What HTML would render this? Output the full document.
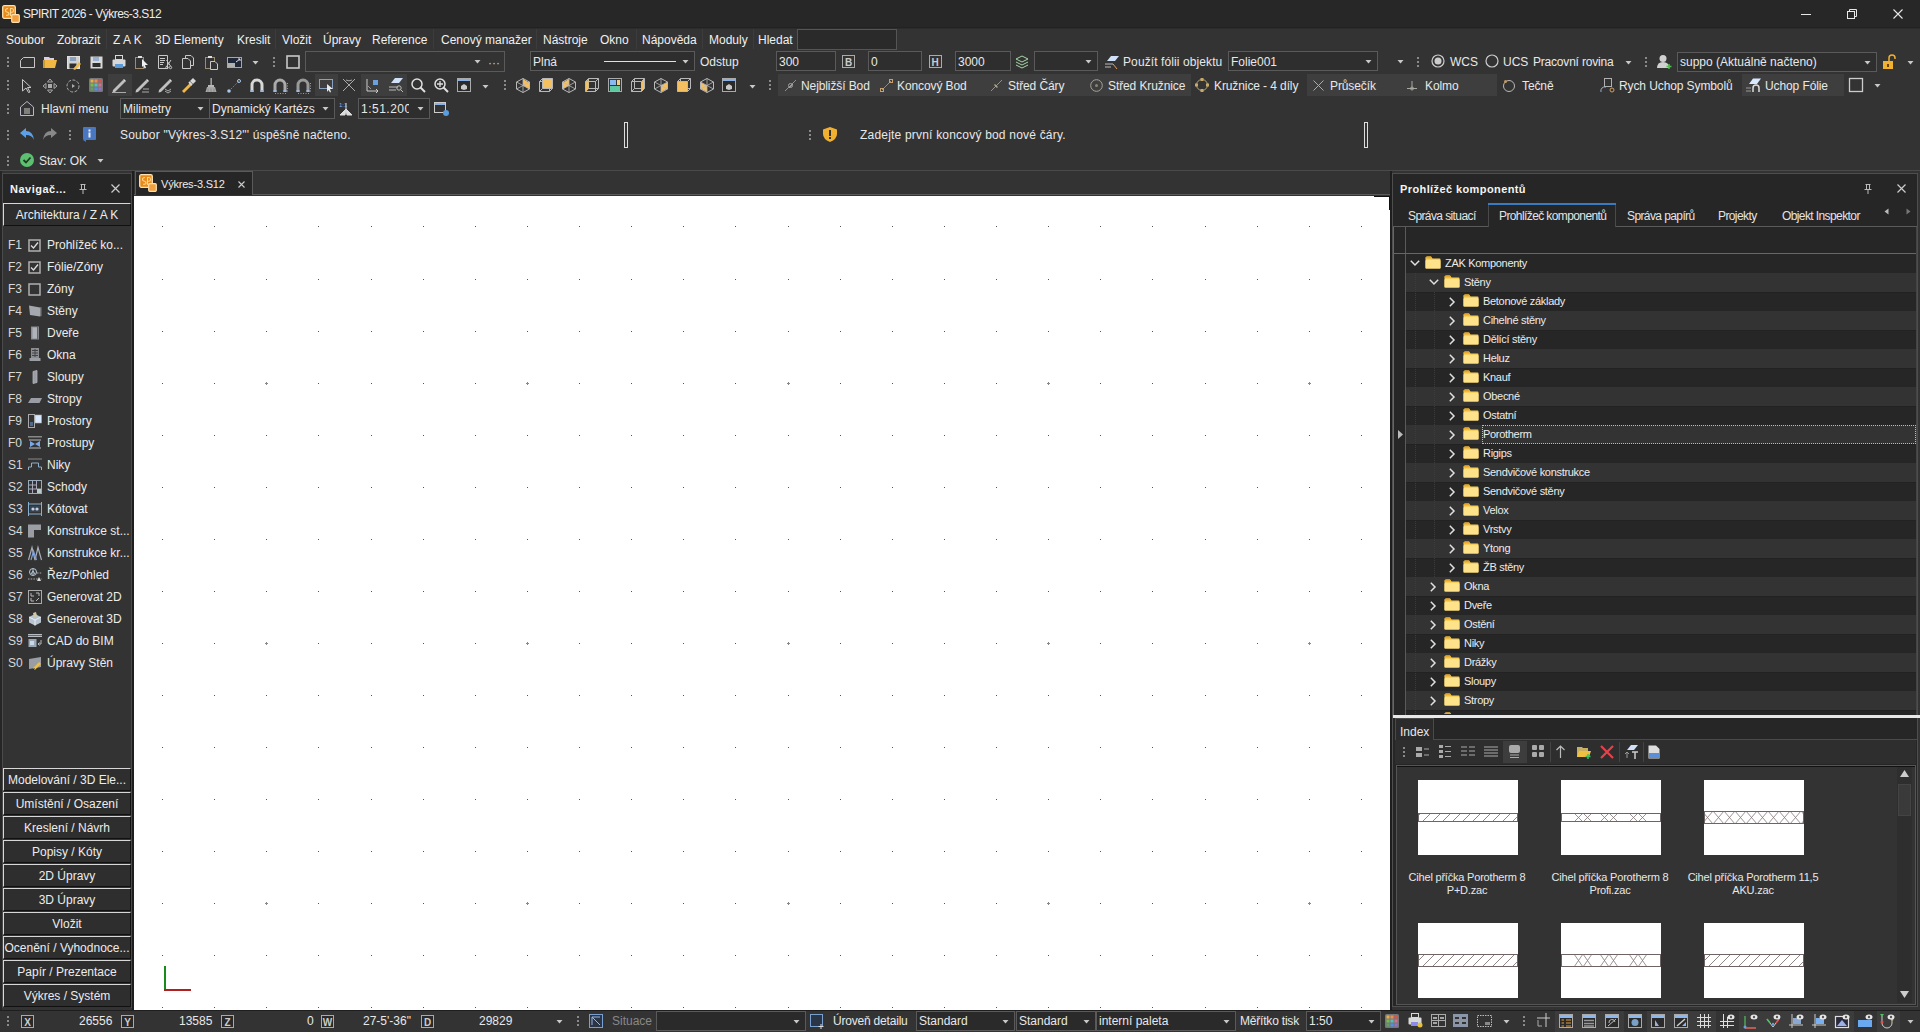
<!DOCTYPE html>
<html><head><meta charset="utf-8"><style>
html,body{margin:0;padding:0;}
body{width:1920px;height:1032px;overflow:hidden;position:relative;background:#333333;font-family:"Liberation Sans",sans-serif;}
body>div,body>span,body>svg{position:absolute;}
span{white-space:nowrap;line-height:normal;}
svg{overflow:visible;}
</style></head><body>
<div style="left:0px;top:0px;width:1920px;height:28px;background:#272727"></div>
<div style="left:0px;top:27px;width:1920px;height:1px;background:#222222"></div>
<div style="left:0px;top:28px;width:1920px;height:1px;background:#2c2c2c"></div>
<svg style="left:2px;top:5px;" width="18" height="18" viewBox="0 0 18 18"><rect x="0.7" y="0.7" width="12.6" height="12.6" rx="1.5" fill="#e88a1a" stroke="#ffe0b0" stroke-width="1.3"/><path d="M6 3.5Q3.5 3.5 3.5 5.5Q3.5 7 5.5 7.2Q7 7.5 7 9Q7 10.5 4 10.2M8.5 11V3.5H10Q11.5 3.5 11.5 5.5Q11.5 7.3 10 7.3H8.5" fill="none" stroke="#ffd890" stroke-width="1.1"/><rect x="9.7" y="9.7" width="7.6" height="7.6" rx="1" fill="#f0a040" stroke="#ffe0b0" stroke-width="1.2"/></svg>
<span style="left:23px;top:7px;font-size:12px;color:#ececec;letter-spacing:-0.5px">SPIRIT 2026 - Výkres-3.S12</span>
<div style="left:1801px;top:14px;width:10px;height:1px;background:#e8e8e8"></div>
<svg style="left:1847px;top:9px;" width="10" height="10" viewBox="0 0 10 10"><rect x="0.5" y="2.5" width="7" height="7" fill="none" stroke="#e8e8e8"/><path d="M2.5 2.5V0.5H9.5V7.5H7.5" fill="none" stroke="#e8e8e8"/></svg>
<svg style="left:1893px;top:9px;" width="10" height="10" viewBox="0 0 10 10"><path d="M0.5 0.5L9.5 9.5M9.5 0.5L0.5 9.5" stroke="#e8e8e8" stroke-width="1.1"/></svg>
<span style="left:6px;top:33px;font-size:12px;color:#f0f0f0;">Soubor</span>
<span style="left:57px;top:33px;font-size:12px;color:#f0f0f0;">Zobrazit</span>
<span style="left:113px;top:33px;font-size:12px;color:#f0f0f0;">Z A K</span>
<span style="left:155px;top:33px;font-size:12px;color:#f0f0f0;">3D Elementy</span>
<span style="left:237px;top:33px;font-size:12px;color:#f0f0f0;">Kreslit</span>
<span style="left:282px;top:33px;font-size:12px;color:#f0f0f0;">Vložit</span>
<span style="left:323px;top:33px;font-size:12px;color:#f0f0f0;">Úpravy</span>
<span style="left:372px;top:33px;font-size:12px;color:#f0f0f0;">Reference</span>
<span style="left:441px;top:33px;font-size:12px;color:#f0f0f0;">Cenový manažer</span>
<span style="left:543px;top:33px;font-size:12px;color:#f0f0f0;">Nástroje</span>
<span style="left:600px;top:33px;font-size:12px;color:#f0f0f0;">Okno</span>
<span style="left:642px;top:33px;font-size:12px;color:#f0f0f0;">Nápověda</span>
<span style="left:709px;top:33px;font-size:12px;color:#f0f0f0;">Moduly</span>
<span style="left:758px;top:33px;font-size:12px;color:#f0f0f0;">Hledat</span>
<div style="left:106px;top:29px;width:1px;height:20px;background:#3c3c3c"></div>
<div style="left:275px;top:29px;width:1px;height:20px;background:#3c3c3c"></div>
<div style="left:433px;top:29px;width:1px;height:20px;background:#3c3c3c"></div>
<div style="left:536px;top:29px;width:1px;height:20px;background:#3c3c3c"></div>
<div style="left:636px;top:29px;width:1px;height:20px;background:#3c3c3c"></div>
<div style="left:702px;top:29px;width:1px;height:20px;background:#3c3c3c"></div>
<div style="left:753px;top:29px;width:1px;height:20px;background:#3c3c3c"></div>
<div style="left:797px;top:29px;width:100px;height:21px;background:#2a2a2a;border:1px solid #555;box-sizing:border-box"></div>
<svg style="left:7px;top:57px;" width="2" height="10" viewBox="0 0 2 10"><rect x="0" y="0" width="2" height="2" fill="#8a8a8a"/><rect x="0" y="4" width="2" height="2" fill="#8a8a8a"/><rect x="0" y="8" width="2" height="2" fill="#8a8a8a"/></svg>
<svg style="left:20px;top:57px;" width="16" height="16" viewBox="0 0 16 16"><path d="M3.5 0.5H14.5V10.5H0.5V3.5Z" fill="none" stroke="#c8c8c8"/></svg>
<svg style="left:43px;top:56px;" width="16" height="16" viewBox="0 0 16 16"><path d="M1 1H6L7 2H11V4H1Z" fill="#d8d0e8"/><path d="M0 12L2 4H14L12 12Z" fill="#f2b844"/><path d="M0 4H2V12H0Z" fill="#c89a30"/></svg>
<svg style="left:67px;top:56px;" width="16" height="16" viewBox="0 0 16 16"><rect x="0.5" y="0.5" width="12" height="12" fill="#d0d0d0" stroke="#e0e0e0"/><rect x="3" y="1" width="6" height="4" fill="#8aa0c0"/><rect x="2.5" y="7.5" width="7" height="5" fill="#2e2e2e"/><path d="M6 13L12 6L14 8L8 14Z" fill="#f2b844"/></svg>
<svg style="left:90px;top:56px;" width="16" height="16" viewBox="0 0 16 16"><rect x="0.5" y="0.5" width="12" height="12" fill="#d8d8d8"/><rect x="3" y="1" width="6" height="4" fill="#9ab0d0"/><rect x="2.5" y="7" width="8" height="4" fill="#2e2e2e"/></svg>
<svg style="left:112px;top:55px;" width="16" height="16" viewBox="0 0 16 16"><rect x="3.5" y="0.5" width="7" height="4" fill="none" stroke="#d8d8d8"/><rect x="0.5" y="4.5" width="13" height="7" rx="1" fill="#d8d8d8"/><rect x="3" y="9" width="8" height="4" fill="#5b9bd5"/></svg>
<svg style="left:135px;top:55px;" width="16" height="16" viewBox="0 0 16 16"><rect x="0.5" y="2.5" width="8" height="11" fill="none" stroke="#a08c6c"/><rect x="3" y="1" width="4" height="2" fill="#e0e0e0"/><path d="M7 4L13 10H10L11 13L9.5 13.5L8.5 10.5L7 12Z" fill="#f0f0f0"/></svg>
<svg style="left:158px;top:55px;" width="16" height="16" viewBox="0 0 16 16"><path d="M0.5 0.5H9.5V13.5H0.5Z" fill="none" stroke="#c8c8c8"/><path d="M2 3.5H7M2 5.5H7M2 7.5H6M2 9.5H5" stroke="#c8c8c8"/><circle cx="9" cy="12.5" r="1.2" fill="none" stroke="#c8c8c8"/><circle cx="12.5" cy="12.5" r="1.2" fill="none" stroke="#c8c8c8"/><path d="M9 11L13 5M12.5 11L8.5 5" stroke="#c8c8c8"/></svg>
<svg style="left:182px;top:55px;" width="16" height="16" viewBox="0 0 16 16"><path d="M3.5 0.5H9L11.5 3V10.5H3.5Z" fill="none" stroke="#c8c8c8"/><path d="M0.5 3.5H6L8.5 6V13.5H0.5Z" fill="#333" stroke="#c8c8c8"/></svg>
<svg style="left:205px;top:55px;" width="16" height="16" viewBox="0 0 16 16"><rect x="0.5" y="2.5" width="9" height="11" fill="none" stroke="#a08c6c"/><rect x="3" y="1" width="4" height="2" fill="#e0e0e0"/><path d="M5.5 6.5H10L12.5 9V14.5H5.5Z" fill="#333" stroke="#c8c8c8"/></svg>
<svg style="left:227px;top:57px;" width="16" height="16" viewBox="0 0 16 16"><rect x="0.5" y="0.5" width="14" height="10" fill="#1e2838" stroke="#9aa8c0"/><rect x="1" y="6" width="7" height="4" fill="#b0b0b0"/><path d="M9 5L13 2M11 2H13V4" stroke="#e0e0e0"/></svg>
<svg style="left:252px;top:61px;" width="7" height="4" viewBox="0 0 7 4"><path d="M0.5 0H6.5L3.5 3.5Z" fill="#c8c8c8"/></svg>
<svg style="left:273px;top:57px;" width="2" height="10" viewBox="0 0 2 10"><rect x="0" y="0" width="2" height="2" fill="#8a8a8a"/><rect x="0" y="4" width="2" height="2" fill="#8a8a8a"/><rect x="0" y="8" width="2" height="2" fill="#8a8a8a"/></svg>
<svg style="left:286px;top:55px;" width="16" height="16" viewBox="0 0 16 16"><rect x="1" y="1" width="12" height="12" fill="none" stroke="#c8c8c8" stroke-width="1.6"/></svg>
<div style="left:305px;top:51px;width:200px;height:21px;background:#333;border:1px solid #5a5a5a;box-sizing:border-box"></div>
<svg style="left:474px;top:60px;" width="7" height="4" viewBox="0 0 7 4"><path d="M0.5 0H6.5L3.5 3.5Z" fill="#c8c8c8"/></svg>
<span style="left:488px;top:56px;font-size:12px;color:#c8c8c8;">···</span>
<div style="left:530px;top:51px;width:165px;height:20px;background:#2e2e2e;border:1px solid #5a5a5a;box-sizing:border-box"></div>
<span style="left:533px;top:55px;font-size:12px;color:#e8e8e8;">Plná</span>
<svg style="left:682px;top:60px;" width="7" height="4" viewBox="0 0 7 4"><path d="M0.5 0H6.5L3.5 3.5Z" fill="#c8c8c8"/></svg>
<div style="left:604px;top:61px;width:72px;height:1px;background:#e0e0e0"></div>
<span style="left:700px;top:55px;font-size:12px;color:#e8e8e8;">Odstup</span>
<div style="left:776px;top:51px;width:60px;height:20px;background:#2e2e2e;border:1px solid #5a5a5a;box-sizing:border-box"></div>
<span style="left:779px;top:55px;font-size:12px;color:#e8e8e8;">300</span>
<svg style="left:842px;top:55px;" width="13" height="13" viewBox="0 0 13 13"><rect x="0.5" y="0.5" width="12" height="12" fill="none" stroke="#aaa"/><text x="3" y="10.5" font-size="10" font-weight="bold" fill="#ccc" font-family="Liberation Sans">B</text></svg>
<div style="left:868px;top:51px;width:54px;height:20px;background:#2e2e2e;border:1px solid #5a5a5a;box-sizing:border-box"></div>
<span style="left:871px;top:55px;font-size:12px;color:#e8e8e8;">0</span>
<svg style="left:929px;top:55px;" width="13" height="13" viewBox="0 0 13 13"><rect x="0.5" y="0.5" width="12" height="12" fill="none" stroke="#aaa"/><text x="2.5" y="10.5" font-size="10" font-weight="bold" fill="#ccc" font-family="Liberation Sans">H</text></svg>
<div style="left:955px;top:51px;width:56px;height:20px;background:#2e2e2e;border:1px solid #5a5a5a;box-sizing:border-box"></div>
<span style="left:958px;top:55px;font-size:12px;color:#e8e8e8;">3000</span>
<svg style="left:1015px;top:55px;" width="14" height="14" viewBox="0 0 14 14"><path d="M1 4L7 1L13 4L7 7Z" fill="none" stroke="#a8d8a8"/><path d="M1 7L7 10L13 7M1 10L7 13L13 10" fill="none" stroke="#a8d8a8"/></svg>
<div style="left:1034px;top:51px;width:64px;height:20px;background:#2e2e2e;border:1px solid #5a5a5a;box-sizing:border-box"></div>
<svg style="left:1085px;top:60px;" width="7" height="4" viewBox="0 0 7 4"><path d="M0.5 0H6.5L3.5 3.5Z" fill="#c8c8c8"/></svg>
<svg style="left:1104px;top:55px;" width="16" height="15" viewBox="0 0 16 15"><path d="M3 6L7 1H15L11 6Z" fill="#cfe0f8"/><path d="M1 9H9M1 12H7" stroke="#bbb"/><path d="M9 9L13 14" stroke="#e0a060"/></svg>
<span style="left:1123px;top:55px;font-size:12px;color:#e8e8e8;letter-spacing:0.1px">Použít fólii objektu</span>
<div style="left:1228px;top:51px;width:150px;height:20px;background:#2e2e2e;border:1px solid #5a5a5a;box-sizing:border-box"></div>
<span style="left:1231px;top:55px;font-size:12px;color:#e8e8e8;">Folie001</span>
<svg style="left:1365px;top:60px;" width="7" height="4" viewBox="0 0 7 4"><path d="M0.5 0H6.5L3.5 3.5Z" fill="#c8c8c8"/></svg>
<svg style="left:1397px;top:60px;" width="7" height="4" viewBox="0 0 7 4"><path d="M0.5 0H6.5L3.5 3.5Z" fill="#c8c8c8"/></svg>
<svg style="left:1417px;top:57px;" width="2" height="10" viewBox="0 0 2 10"><rect x="0" y="0" width="2" height="2" fill="#8a8a8a"/><rect x="0" y="4" width="2" height="2" fill="#8a8a8a"/><rect x="0" y="8" width="2" height="2" fill="#8a8a8a"/></svg>
<svg style="left:1431px;top:54px;" width="15" height="15" viewBox="0 0 15 15"><circle cx="7" cy="7" r="6" fill="none" stroke="#ccc" stroke-width="1.2"/><circle cx="7" cy="7" r="3.5" fill="#ccc"/></svg>
<span style="left:1450px;top:55px;font-size:12px;color:#e8e8e8;">WCS</span>
<svg style="left:1485px;top:54px;" width="15" height="15" viewBox="0 0 15 15"><circle cx="7" cy="7" r="6" fill="none" stroke="#ccc" stroke-width="1.2"/></svg>
<span style="left:1503px;top:55px;font-size:12px;color:#e8e8e8;">UCS</span>
<span style="left:1533px;top:55px;font-size:12px;color:#e8e8e8;letter-spacing:-0.2px">Pracovní rovina</span>
<svg style="left:1625px;top:61px;" width="7" height="4" viewBox="0 0 7 4"><path d="M0.5 0H6.5L3.5 3.5Z" fill="#c8c8c8"/></svg>
<svg style="left:1645px;top:57px;" width="2" height="10" viewBox="0 0 2 10"><rect x="0" y="0" width="2" height="2" fill="#8a8a8a"/><rect x="0" y="4" width="2" height="2" fill="#8a8a8a"/><rect x="0" y="8" width="2" height="2" fill="#8a8a8a"/></svg>
<svg style="left:1657px;top:54px;" width="16" height="16" viewBox="0 0 16 16"><circle cx="6" cy="4.5" r="3.5" fill="#d0d0d0"/><path d="M0 14Q0 8 6 8Q12 8 12 14Z" fill="#d0d0d0"/><path d="M12 10V15M9.5 12.5H14.5" stroke="#50c050" stroke-width="1.5"/></svg>
<div style="left:1677px;top:52px;width:200px;height:20px;background:#2e2e2e;border:1px solid #5a5a5a;box-sizing:border-box"></div>
<span style="left:1680px;top:55px;font-size:12px;color:#e8e8e8;">suppo (Aktuálně načteno)</span>
<svg style="left:1864px;top:61px;" width="7" height="4" viewBox="0 0 7 4"><path d="M0.5 0H6.5L3.5 3.5Z" fill="#c8c8c8"/></svg>
<svg style="left:1882px;top:54px;" width="15" height="15" viewBox="0 0 15 15"><path d="M7 7V4A3 3 0 0 1 13 4V5" fill="none" stroke="#f0b030" stroke-width="1.5"/><rect x="1" y="7" width="10" height="8" fill="#f0b030"/><rect x="5" y="10" width="2" height="3" fill="#704000"/></svg>
<svg style="left:1907px;top:61px;" width="7" height="4" viewBox="0 0 7 4"><path d="M0.5 0H6.5L3.5 3.5Z" fill="#c8c8c8"/></svg>
<div style="left:108px;top:74px;width:24px;height:22px;background:#3e3e3e"></div>
<div style="left:315px;top:74px;width:23px;height:22px;background:#3e3e3e"></div>
<div style="left:361px;top:74px;width:46px;height:22px;background:#3e3e3e"></div>
<div style="left:778px;top:74px;width:413px;height:22px;background:#3e3e3e"></div>
<div style="left:1307px;top:74px;width:190px;height:22px;background:#3e3e3e"></div>
<div style="left:1742px;top:74px;width:102px;height:22px;background:#3e3e3e"></div>
<svg style="left:7px;top:80px;" width="2" height="10" viewBox="0 0 2 10"><rect x="0" y="0" width="2" height="2" fill="#8a8a8a"/><rect x="0" y="4" width="2" height="2" fill="#8a8a8a"/><rect x="0" y="8" width="2" height="2" fill="#8a8a8a"/></svg>
<svg style="left:22px;top:79px;" width="16" height="16" viewBox="0 0 16 16"><path d="M0.5 0.5L9 8.5H5.5L8 13L6.5 13.5L4 9L0.5 12Z" fill="none" stroke="#c8c8c8"/></svg>
<svg style="left:43px;top:79px;" width="16" height="16" viewBox="0 0 16 16"><path d="M7 0L9.5 3H4.5ZM7 14L9.5 11H4.5ZM0 7L3 4.5V9.5ZM14 7L11 4.5V9.5Z" fill="none" stroke="#aaa"/><rect x="5" y="5" width="4" height="4" fill="#aaa"/></svg>
<svg style="left:66px;top:79px;" width="16" height="16" viewBox="0 0 16 16"><circle cx="7" cy="7" r="6" fill="none" stroke="#aaa" stroke-dasharray="3 1.5"/><path d="M6 5L9 7L6 9Z" fill="#aaa"/></svg>
<svg style="left:89px;top:78px;" width="16" height="16" viewBox="0 0 16 16"><rect x="0" y="0" width="14" height="14" rx="1.5" fill="#777"/><rect x="1.5" y="1.5" width="3" height="3" fill="#e8b040"/><rect x="5.5" y="1.5" width="3" height="3" fill="#e89050"/><rect x="9.5" y="1.5" width="3" height="3" fill="#e05050"/><rect x="1.5" y="5.5" width="3" height="3" fill="#70c050"/><rect x="5.5" y="5.5" width="3" height="3" fill="#50c0c0"/><rect x="9.5" y="5.5" width="3" height="3" fill="#d07090"/><rect x="1.5" y="9.5" width="3" height="3" fill="#60a060"/><rect x="5.5" y="9.5" width="3" height="3" fill="#5090e0"/><rect x="9.5" y="9.5" width="3" height="3" fill="#9070d0"/></svg>
<svg style="left:112px;top:78px;" width="16" height="16" viewBox="0 0 16 16"><path d="M1 12L11 2L13 4L3 14L0.5 14.5Z" fill="#c0c0c0"/><path d="M11 2L12 1L14 3L13 4Z" fill="#e0e0e0"/><path d="M0 14.5H14" stroke="#aaa"/></svg>
<svg style="left:135px;top:78px;" width="16" height="16" viewBox="0 0 16 16"><path d="M1 12L11 2L13 4L3 14L0.5 14.5Z" fill="#c0c0c0"/><path d="M11 2L12 1L14 3L13 4Z" fill="#e0e0e0"/><path d="M8 11H14M7 14H14" stroke="#aaa"/></svg>
<svg style="left:158px;top:78px;" width="16" height="16" viewBox="0 0 16 16"><path d="M1 12L11 2L13 4L3 14L0.5 14.5Z" fill="#c0c0c0"/><path d="M11 2L12 1L14 3L13 4Z" fill="#e0e0e0"/><path d="M7 11L10 13L13 11M7 13L10 15L13 13" stroke="#aaa" fill="none"/></svg>
<svg style="left:181px;top:77px;" width="16" height="16" viewBox="0 0 16 16"><path d="M1 14L9 6L11 8L3 16Z" fill="#f2b844"/><path d="M9 4L12 1L15 4L12 7Z" fill="#d8d8d8"/><path d="M8 5L11 8" stroke="#d8d8d8" stroke-width="2"/></svg>
<svg style="left:205px;top:78px;" width="16" height="16" viewBox="0 0 16 16"><rect x="5.5" y="0" width="1.3" height="8" fill="#b8b8b8"/><path d="M3 7H9V9H3Z" fill="#b8b8b8"/><path d="M2 9H10L11.5 14H0.5Z" fill="#a8a8a8"/><path d="M3 10.5V14M6 10.5V14M9 10.5V14" stroke="#777" stroke-width="0.6"/></svg>
<svg style="left:227px;top:79px;" width="16" height="16" viewBox="0 0 16 16"><path d="M2 12L12 2" stroke="#d07050" stroke-dasharray="1.5 1.5"/><circle cx="2" cy="12" r="1.8" fill="#a8c8e8"/><circle cx="12" cy="2" r="1.5" fill="none" stroke="#a8c8e8"/></svg>
<svg style="left:250px;top:79px;" width="16" height="16" viewBox="0 0 16 16"><path d="M2 13V6A5 5 0 0 1 12 6V13" fill="none" stroke="#d8d8d8" stroke-width="3"/><rect x="0.5" y="11" width="3" height="2" fill="#a0b8d8"/><rect x="10.5" y="11" width="3" height="2" fill="#a0b8d8"/></svg>
<svg style="left:273px;top:79px;" width="16" height="16" viewBox="0 0 16 16"><path d="M2 13V6A5 5 0 0 1 12 6V13" fill="none" stroke="#aaa" stroke-width="3"/><rect x="0.5" y="11" width="3" height="2" fill="#a0b8d8"/><rect x="10.5" y="11" width="3" height="2" fill="#a0b8d8"/><path d="M2 14.5H13M14.5 4V14" stroke="#999" stroke-dasharray="1 1.5"/></svg>
<svg style="left:296px;top:79px;" width="16" height="16" viewBox="0 0 16 16"><path d="M2 13V6A5 5 0 0 1 12 6V13" fill="none" stroke="#999" stroke-width="3"/><rect x="0.5" y="11" width="3" height="2" fill="#a0b8d8"/><rect x="10.5" y="11" width="3" height="2" fill="#a0b8d8"/><path d="M2 14.5H13M14.5 4V14" stroke="#999" stroke-dasharray="1 1.5"/></svg>
<svg style="left:319px;top:79px;" width="16" height="16" viewBox="0 0 16 16"><rect x="0.5" y="0.5" width="13" height="9" fill="none" stroke="#8aa0c0"/><path d="M8 5L14 10H11L12 13L11 13.5L9.5 11L8 13Z" fill="#e8e8e8"/></svg>
<svg style="left:342px;top:78px;" width="16" height="16" viewBox="0 0 16 16"><path d="M1 1L13 13M13 1L1 13" stroke="#aaa"/><path d="M4 2A4 2 0 0 0 10 2" fill="none" stroke="#aaa"/></svg>
<svg style="left:365px;top:78px;" width="16" height="16" viewBox="0 0 16 16"><path d="M2 1V13H13" fill="none" stroke="#ccc"/><path d="M11 11L13 13L11 15" fill="none" stroke="#ccc"/><rect x="8" y="2" width="5" height="5" fill="#6aa0e0"/><path d="M3 8L6 11" stroke="#999"/></svg>
<svg style="left:388px;top:78px;" width="16" height="16" viewBox="0 0 16 16"><path d="M3 5L7 0H15L11 5Z" fill="#cfe0f8"/><path d="M1 9H10M1 12H8" stroke="#bbb"/><circle cx="11" cy="10" r="2.2" fill="none" stroke="#bbb"/><path d="M12.5 11.5L15 14" stroke="#bbb"/></svg>
<svg style="left:411px;top:78px;" width="16" height="16" viewBox="0 0 16 16"><circle cx="6" cy="6" r="5" fill="none" stroke="#e0e0e0" stroke-width="1.5"/><path d="M9.5 9.5L14 14" stroke="#e0e0e0" stroke-width="2"/></svg>
<svg style="left:434px;top:78px;" width="16" height="16" viewBox="0 0 16 16"><circle cx="6" cy="6" r="5" fill="none" stroke="#e0e0e0" stroke-width="1.5"/><path d="M9.5 9.5L14 14" stroke="#e0e0e0" stroke-width="2"/><path d="M6 3V9M3 6H9" stroke="#e0e0e0" stroke-width="1.3"/></svg>
<svg style="left:457px;top:78px;" width="16" height="16" viewBox="0 0 16 16"><rect x="0.5" y="0.5" width="13" height="13" fill="#2a2a2a" stroke="#aaa"/><rect x="1" y="1" width="12" height="2" fill="#8ab0e8"/><path d="M4 8L7 6L10 8L10 11L7 12L4 11Z" fill="#c8c8c8"/></svg>
<svg style="left:482px;top:85px;" width="7" height="4" viewBox="0 0 7 4"><path d="M0.5 0H6.5L3.5 3.5Z" fill="#c8c8c8"/></svg>
<svg style="left:504px;top:80px;" width="2" height="10" viewBox="0 0 2 10"><rect x="0" y="0" width="2" height="2" fill="#8a8a8a"/><rect x="0" y="4" width="2" height="2" fill="#8a8a8a"/><rect x="0" y="8" width="2" height="2" fill="#8a8a8a"/></svg>
<svg style="left:516px;top:78px;" width="16" height="16" viewBox="0 0 16 16"><path d="M7 1L13 4.5V11L7 7.5Z" fill="#f5c060"/><path d="M7 0.5L13.5 4V11L7 14.5L0.5 11V4Z" fill="none" stroke="#b8b8b8"/><path d="M7 0.5V14.5M0.5 4L13.5 11M0.5 11L13.5 4" stroke="#b8b8b8" stroke-width="0.8"/></svg>
<svg style="left:539px;top:78px;" width="16" height="16" viewBox="0 0 16 16"><path d="M0.5 3.5H10.5V13.5H0.5Z M3.5 0.5H13.5V10.5H3.5Z M0.5 3.5L3.5 0.5M10.5 3.5L13.5 0.5M10.5 13.5L13.5 10.5M0.5 13.5L3.5 10.5" fill="none" stroke="#b8b8b8"/><rect x="4" y="1" width="9" height="9" fill="#f5c060"/></svg>
<svg style="left:562px;top:78px;" width="16" height="16" viewBox="0 0 16 16"><path d="M7 1L1 4.5V11L7 7.5Z" fill="#f5c060"/><path d="M7 0.5L13.5 4V11L7 14.5L0.5 11V4Z" fill="none" stroke="#b8b8b8"/><path d="M7 0.5V14.5M0.5 4L13.5 11M0.5 11L13.5 4" stroke="#b8b8b8" stroke-width="0.8"/></svg>
<svg style="left:585px;top:78px;" width="16" height="16" viewBox="0 0 16 16"><path d="M0.5 3.5H10.5V13.5H0.5Z M3.5 0.5H13.5V10.5H3.5Z M0.5 3.5L3.5 0.5M10.5 3.5L13.5 0.5M10.5 13.5L13.5 10.5M0.5 13.5L3.5 10.5" fill="none" stroke="#b8b8b8"/><path d="M1 4L3.5 1V11L1 13.5Z" fill="#f5c060"/></svg>
<svg style="left:608px;top:78px;" width="16" height="16" viewBox="0 0 16 16"><rect x="0.5" y="0.5" width="13" height="13" fill="none" stroke="#aaa"/><rect x="2" y="2" width="6" height="5" fill="#8ab8f0"/><rect x="9" y="2" width="3" height="5" fill="#f0d080"/><rect x="2" y="8" width="10" height="5" fill="#60c8a0"/></svg>
<svg style="left:631px;top:78px;" width="16" height="16" viewBox="0 0 16 16"><path d="M0.5 3.5H10.5V13.5H0.5Z M3.5 0.5H13.5V10.5H3.5Z M0.5 3.5L3.5 0.5M10.5 3.5L13.5 0.5M10.5 13.5L13.5 10.5M0.5 13.5L3.5 10.5" fill="none" stroke="#b8b8b8"/><path d="M10.5 4L13 1V11L10.5 13.5Z" fill="#f5c060"/></svg>
<svg style="left:654px;top:78px;" width="16" height="16" viewBox="0 0 16 16"><path d="M7 7.5L13 4.5V11L7 14Z" fill="#f5c060"/><path d="M7 0.5L13.5 4V11L7 14.5L0.5 11V4Z" fill="none" stroke="#b8b8b8"/><path d="M7 0.5V14.5M0.5 4L13.5 11M0.5 11L13.5 4" stroke="#b8b8b8" stroke-width="0.8"/></svg>
<svg style="left:677px;top:78px;" width="16" height="16" viewBox="0 0 16 16"><path d="M0.5 3.5H10.5V13.5H0.5Z M3.5 0.5H13.5V10.5H3.5Z M0.5 3.5L3.5 0.5M10.5 3.5L13.5 0.5M10.5 13.5L13.5 10.5M0.5 13.5L3.5 10.5" fill="none" stroke="#b8b8b8"/><rect x="1" y="4" width="9" height="9" fill="#f5c060"/></svg>
<svg style="left:700px;top:78px;" width="16" height="16" viewBox="0 0 16 16"><path d="M7 7.5L1 4.5V11L7 14Z" fill="#f5c060"/><path d="M7 0.5L13.5 4V11L7 14.5L0.5 11V4Z" fill="none" stroke="#b8b8b8"/><path d="M7 0.5V14.5M0.5 4L13.5 11M0.5 11L13.5 4" stroke="#b8b8b8" stroke-width="0.8"/></svg>
<svg style="left:722px;top:78px;" width="16" height="16" viewBox="0 0 16 16"><rect x="0.5" y="0.5" width="13" height="13" fill="#2a2a2a" stroke="#aaa"/><rect x="1" y="1" width="12" height="2" fill="#8ab0e8"/><path d="M4 8L7 6L10 8L10 11L7 12L4 11Z" fill="#c8c8c8"/></svg>
<svg style="left:749px;top:85px;" width="7" height="4" viewBox="0 0 7 4"><path d="M0.5 0H6.5L3.5 3.5Z" fill="#c8c8c8"/></svg>
<svg style="left:769px;top:80px;" width="2" height="10" viewBox="0 0 2 10"><rect x="0" y="0" width="2" height="2" fill="#8a8a8a"/><rect x="0" y="4" width="2" height="2" fill="#8a8a8a"/><rect x="0" y="8" width="2" height="2" fill="#8a8a8a"/></svg>
<svg style="left:784px;top:79px;" width="16" height="16" viewBox="0 0 16 16"><path d="M1 12L12 1" stroke="#909090"/><circle cx="6.5" cy="6.5" r="2" fill="none" stroke="#a0a0a0"/><path d="M5 9L9 5" stroke="#a0a0a0"/></svg>
<span style="left:801px;top:79px;font-size:12px;color:#e8e8e8;letter-spacing:-0.1px">Nejbližší Bod</span>
<svg style="left:880px;top:79px;" width="16" height="16" viewBox="0 0 16 16"><path d="M2 11L11 2" stroke="#a08868"/><rect x="0.5" y="9.5" width="3" height="3" fill="none" stroke="#c8a070"/><rect x="9.5" y="0.5" width="3" height="3" fill="none" stroke="#c8a070"/></svg>
<span style="left:897px;top:79px;font-size:12px;color:#e8e8e8;letter-spacing:-0.1px">Koncový Bod</span>
<svg style="left:990px;top:79px;" width="16" height="16" viewBox="0 0 16 16"><path d="M1 12L12 1" stroke="#909090"/><path d="M4.5 5.5L7.5 8.5" stroke="#b0a080" stroke-width="1.5"/></svg>
<span style="left:1008px;top:79px;font-size:12px;color:#e8e8e8;letter-spacing:-0.1px">Střed Čáry</span>
<svg style="left:1090px;top:79px;" width="16" height="16" viewBox="0 0 16 16"><circle cx="6.5" cy="6.5" r="5.8" fill="none" stroke="#a8a498"/><circle cx="6.5" cy="6.5" r="1.5" fill="#8a8670"/></svg>
<span style="left:1108px;top:79px;font-size:12px;color:#e8e8e8;letter-spacing:-0.1px">Střed Kružnice</span>
<svg style="left:1195px;top:78px;" width="16" height="16" viewBox="0 0 16 16"><circle cx="7" cy="7" r="5.5" fill="none" stroke="#b0a070"/><rect x="5.5" y="0" width="3" height="3" fill="#c8a868"/><rect x="5.5" y="11" width="3" height="3" fill="#c8a868"/><rect x="0" y="5.5" width="3" height="3" fill="#c8a868"/><rect x="11" y="5.5" width="3" height="3" fill="#c8a868"/></svg>
<span style="left:1214px;top:79px;font-size:12px;color:#e8e8e8;letter-spacing:-0.1px">Kružnice - 4 díly</span>
<svg style="left:1313px;top:80px;" width="16" height="16" viewBox="0 0 16 16"><path d="M0.5 0.5L10.5 10.5M10.5 0.5L0.5 10.5" stroke="#a8b0a0"/></svg>
<span style="left:1330px;top:79px;font-size:12px;color:#e8e8e8;letter-spacing:-0.1px">Průsečík</span>
<svg style="left:1407px;top:81px;" width="16" height="16" viewBox="0 0 16 16"><path d="M5 0V7M0 7.5H10" stroke="#a8a8a0"/><circle cx="5" cy="7.5" r="1.5" fill="none" stroke="#a8a8a0"/></svg>
<span style="left:1425px;top:79px;font-size:12px;color:#e8e8e8;letter-spacing:-0.1px">Kolmo</span>
<svg style="left:1503px;top:79px;" width="16" height="16" viewBox="0 0 16 16"><circle cx="6" cy="7" r="5.5" fill="none" stroke="#b8b8b8"/><circle cx="2.5" cy="2.5" r="1.5" fill="#c89850"/></svg>
<span style="left:1522px;top:79px;font-size:12px;color:#e8e8e8;letter-spacing:-0.1px">Tečně</span>
<svg style="left:1600px;top:78px;" width="16" height="16" viewBox="0 0 16 16"><rect x="4.5" y="0.5" width="7" height="8" fill="none" stroke="#b0b0b0"/><path d="M1 14A4 4 0 0 1 6 9" fill="none" stroke="#9ab0c8"/><circle cx="12" cy="12" r="2" fill="none" stroke="#d0a060"/></svg>
<span style="left:1619px;top:79px;font-size:12px;color:#e8e8e8;letter-spacing:-0.1px">Rych Uchop Symbolů</span>
<svg style="left:1746px;top:78px;" width="16" height="16" viewBox="0 0 16 16"><path d="M3 6L7 0.5H15L11 6Z" fill="#d8e8ff"/><path d="M0 10H5M0 13H5" stroke="#999"/><path d="M7 14V10A3 3 0 0 1 13 10V14" fill="none" stroke="#ddd" stroke-width="1.5"/></svg>
<span style="left:1765px;top:79px;font-size:12px;color:#e8e8e8;letter-spacing:-0.1px">Uchop Fólie</span>
<svg style="left:1849px;top:78px;" width="14" height="14" viewBox="0 0 14 14"><rect x="0.5" y="0.5" width="13" height="13" fill="none" stroke="#ccc" stroke-width="1.3"/></svg>
<svg style="left:1874px;top:84px;" width="7" height="4" viewBox="0 0 7 4"><path d="M0.5 0H6.5L3.5 3.5Z" fill="#c8c8c8"/></svg>
<svg style="left:7px;top:104px;" width="2" height="10" viewBox="0 0 2 10"><rect x="0" y="0" width="2" height="2" fill="#8a8a8a"/><rect x="0" y="4" width="2" height="2" fill="#8a8a8a"/><rect x="0" y="8" width="2" height="2" fill="#8a8a8a"/></svg>
<svg style="left:20px;top:101px;" width="16" height="16" viewBox="0 0 16 16"><path d="M0.5 6L7 0.5L13.5 6V14.5H0.5Z" fill="none" stroke="#b8b8c8"/><path d="M4 8H10M4 10H10M4 12H10" stroke="#ccc"/></svg>
<span style="left:41px;top:102px;font-size:12px;color:#e8e8e8;">Hlavní menu</span>
<div style="left:120px;top:98px;width:90px;height:21px;background:#2e2e2e;border:1px solid #5a5a5a;box-sizing:border-box"></div>
<span style="left:123px;top:102px;font-size:12px;color:#e8e8e8;">Milimetry</span>
<svg style="left:197px;top:107px;" width="7" height="4" viewBox="0 0 7 4"><path d="M0.5 0H6.5L3.5 3.5Z" fill="#c8c8c8"/></svg>
<div style="left:209px;top:98px;width:126px;height:21px;background:#2e2e2e;border:1px solid #5a5a5a;box-sizing:border-box"></div>
<span style="left:212px;top:102px;font-size:12px;color:#e8e8e8;">Dynamický Kartézs</span>
<svg style="left:322px;top:107px;" width="7" height="4" viewBox="0 0 7 4"><path d="M0.5 0H6.5L3.5 3.5Z" fill="#c8c8c8"/></svg>
<svg style="left:339px;top:101px;" width="16" height="16" viewBox="0 0 16 16"><path d="M7 8L13 14H8ZM7 8L1 14H6ZM7 8L7 2" fill="#ddd" stroke="#ddd"/><text x="0" y="6" font-size="6" fill="#8ab0e0" font-family="Liberation Sans">1:1</text></svg>
<div style="left:358px;top:98px;width:72px;height:21px;background:#2e2e2e;border:1px solid #5a5a5a;box-sizing:border-box"></div>
<svg style="left:417px;top:107px;" width="7" height="4" viewBox="0 0 7 4"><path d="M0.5 0H6.5L3.5 3.5Z" fill="#c8c8c8"/></svg>
<span style="left:361px;top:102px;width:48px;overflow:hidden;font-size:12px;letter-spacing:0.5px;color:#e8e8e8;">1:51.200</span>
<svg style="left:434px;top:101px;" width="16" height="16" viewBox="0 0 16 16"><rect x="0.5" y="1.5" width="11" height="10" fill="none" stroke="#ccc"/><rect x="1" y="2" width="10" height="2" fill="#8ab0e8"/><circle cx="12" cy="12" r="3" fill="#5b9be0"/></svg>
<svg style="left:7px;top:130px;" width="2" height="10" viewBox="0 0 2 10"><rect x="0" y="0" width="2" height="2" fill="#8a8a8a"/><rect x="0" y="4" width="2" height="2" fill="#8a8a8a"/><rect x="0" y="8" width="2" height="2" fill="#8a8a8a"/></svg>
<svg style="left:19px;top:127px;" width="16" height="16" viewBox="0 0 16 16"><path d="M7 1L1 6L7 11V8Q13 8 15 13Q14 4 7 4Z" fill="#5ba0e8"/></svg>
<svg style="left:42px;top:127px;" width="16" height="16" viewBox="0 0 16 16"><path d="M9 1L15 6L9 11V8Q3 8 1 13Q2 4 9 4Z" fill="#888"/></svg>
<svg style="left:69px;top:130px;" width="2" height="10" viewBox="0 0 2 10"><rect x="0" y="0" width="2" height="2" fill="#8a8a8a"/><rect x="0" y="4" width="2" height="2" fill="#8a8a8a"/><rect x="0" y="8" width="2" height="2" fill="#8a8a8a"/></svg>
<svg style="left:83px;top:127px;" width="16" height="16" viewBox="0 0 16 16"><rect x="0" y="0" width="13" height="13" rx="1" fill="#4a78c0"/><path d="M0 13H3V15Z" fill="#4a78c0"/><rect x="5.5" y="2.5" width="2" height="2" fill="#eef"/><rect x="5.5" y="5.5" width="2" height="5" fill="#eef"/></svg>
<span style="left:120px;top:128px;font-size:12px;color:#e8e8e8;letter-spacing:0.2px">Soubor "Výkres-3.S12"' úspěšně načteno.</span>
<div style="left:624px;top:122px;width:4px;height:26px;border:1px solid #ddd;box-sizing:border-box"></div>
<svg style="left:809px;top:130px;" width="2" height="10" viewBox="0 0 2 10"><rect x="0" y="0" width="2" height="2" fill="#8a8a8a"/><rect x="0" y="4" width="2" height="2" fill="#8a8a8a"/><rect x="0" y="8" width="2" height="2" fill="#8a8a8a"/></svg>
<svg style="left:823px;top:127px;" width="16" height="16" viewBox="0 0 16 16"><path d="M7 0L14 2.5V7Q14 12 7 15Q0 12 0 7V2.5Z" fill="#f0b030"/><rect x="6" y="3" width="2" height="6" fill="#333"/><rect x="6" y="10" width="2" height="2" fill="#333"/></svg>
<span style="left:860px;top:128px;font-size:12px;color:#e8e8e8;letter-spacing:0.2px">Zadejte první koncový bod nové čáry.</span>
<div style="left:1364px;top:122px;width:4px;height:26px;border:1px solid #ddd;box-sizing:border-box"></div>
<svg style="left:7px;top:156px;" width="2" height="10" viewBox="0 0 2 10"><rect x="0" y="0" width="2" height="2" fill="#8a8a8a"/><rect x="0" y="4" width="2" height="2" fill="#8a8a8a"/><rect x="0" y="8" width="2" height="2" fill="#8a8a8a"/></svg>
<svg style="left:20px;top:153px;" width="16" height="16" viewBox="0 0 16 16"><circle cx="7" cy="7" r="7" fill="#5cc070"/><path d="M3.5 7L6 9.5L10.5 4.5" fill="none" stroke="#1e3a20" stroke-width="1.8"/></svg>
<span style="left:39px;top:154px;font-size:12px;color:#e8e8e8;">Stav: OK</span>
<svg style="left:97px;top:159px;" width="7" height="4" viewBox="0 0 7 4"><path d="M0.5 0H6.5L3.5 3.5Z" fill="#c8c8c8"/></svg>
<div style="left:0px;top:170px;width:1920px;height:1px;background:#4a4a4a"></div>
<div style="left:0px;top:171px;width:134px;height:839px;background:#333"></div>
<div style="left:0px;top:171px;width:2px;height:839px;background:#262626"></div>
<div style="left:2px;top:173px;width:1px;height:835px;background:#4a4a4a"></div>
<div style="left:131px;top:173px;width:1px;height:835px;background:#4a4a4a"></div>
<div style="left:132px;top:171px;width:2px;height:839px;background:#1e1e1e"></div>
<div style="left:2px;top:173px;width:130px;height:1px;background:#4a4a4a"></div>
<div style="left:3px;top:174px;width:128px;height:29px;background:#262626"></div>
<span style="left:10px;top:183px;font-size:11px;color:#f4f4f4;font-weight:bold;letter-spacing:0.5px">Navigač...</span>
<svg style="left:79px;top:184px;" width="8" height="10" viewBox="0 0 8 10"><path d="M1.5 0.5H6.5M2.5 0.5V5M5.5 0.5V5M0.5 5.5H7.5M4 5.5V10" fill="none" stroke="#bbb"/></svg>
<svg style="left:111px;top:184px;" width="9" height="9" viewBox="0 0 9 9"><path d="M0.5 0.5L8.5 8.5M8.5 0.5L0.5 8.5" stroke="#ccc" stroke-width="1.2"/></svg>
<div style="left:3px;top:203px;width:128px;height:23px;background:#2e2e2e;border-top:1px solid #d8d8d8;border-left:1px solid #d8d8d8;border-bottom:1px solid #111;border-right:1px solid #111;box-sizing:border-box"></div>
<span style="left:3px;top:208px;width:128px;text-align:center;font-size:12px;color:#ececec;">Architektura / Z A K</span>
<span style="left:8px;top:238px;font-size:12px;color:#d8d8d8;">F1</span>
<span style="left:47px;top:238px;font-size:12px;color:#ececec;">Prohlížeč ko...</span>
<svg style="left:28px;top:239px;" width="13" height="13" viewBox="0 0 13 13"><rect x="1" y="1" width="11" height="11" fill="none" stroke="#b0b0b0" stroke-width="1.5"/><path d="M3 6.5L5.5 9L10 3.5" fill="none" stroke="#ddd" stroke-width="1.3"/></svg>
<span style="left:8px;top:260px;font-size:12px;color:#d8d8d8;">F2</span>
<span style="left:47px;top:260px;font-size:12px;color:#ececec;">Fólie/Zóny</span>
<svg style="left:28px;top:261px;" width="13" height="13" viewBox="0 0 13 13"><rect x="1" y="1" width="11" height="11" fill="none" stroke="#b0b0b0" stroke-width="1.5"/><path d="M3 6.5L5.5 9L10 3.5" fill="none" stroke="#ddd" stroke-width="1.3"/></svg>
<span style="left:8px;top:282px;font-size:12px;color:#d8d8d8;">F3</span>
<span style="left:47px;top:282px;font-size:12px;color:#ececec;">Zóny</span>
<svg style="left:28px;top:283px;" width="13" height="13" viewBox="0 0 13 13"><rect x="1" y="1" width="11" height="11" fill="none" stroke="#b0b0b0" stroke-width="1.5"/></svg>
<span style="left:8px;top:304px;font-size:12px;color:#d8d8d8;">F4</span>
<span style="left:47px;top:304px;font-size:12px;color:#ececec;">Stěny</span>
<svg style="left:28px;top:304px;" width="14" height="14" viewBox="0 0 14 14"><path d="M1 1.5L12 3.5V12.5L2 11Z" fill="#a4a8ae"/><path d="M12 3.5L13.5 3V12L12 12.5Z" fill="#7a7e84"/></svg>
<span style="left:8px;top:326px;font-size:12px;color:#d8d8d8;">F5</span>
<span style="left:47px;top:326px;font-size:12px;color:#ececec;">Dveře</span>
<svg style="left:28px;top:326px;" width="14" height="14" viewBox="0 0 14 14"><rect x="3" y="0.5" width="8" height="13" fill="#8a8e94"/><rect x="4.5" y="1.5" width="5" height="11" fill="#b0b4ba"/><rect x="9" y="1" width="1.2" height="12" fill="#666"/></svg>
<span style="left:8px;top:348px;font-size:12px;color:#d8d8d8;">F6</span>
<span style="left:47px;top:348px;font-size:12px;color:#ececec;">Okna</span>
<svg style="left:28px;top:348px;" width="14" height="14" viewBox="0 0 14 14"><rect x="3" y="0" width="8" height="10" fill="#8a8e94"/><path d="M4 2.5H10M4 5H10M4 7.5H10M7 1V9" stroke="#444"/><rect x="1.5" y="10" width="11" height="3" fill="#9a9ea4"/></svg>
<span style="left:8px;top:370px;font-size:12px;color:#d8d8d8;">F7</span>
<span style="left:47px;top:370px;font-size:12px;color:#ececec;">Sloupy</span>
<svg style="left:28px;top:370px;" width="14" height="14" viewBox="0 0 14 14"><path d="M5 1.5L9 0.5V12.5L5 13.5Z" fill="#9a9ea4" stroke="#b0b4b8" stroke-width="0.8" stroke-linejoin="round"/></svg>
<span style="left:8px;top:392px;font-size:12px;color:#d8d8d8;">F8</span>
<span style="left:47px;top:392px;font-size:12px;color:#ececec;">Stropy</span>
<svg style="left:28px;top:392px;" width="14" height="14" viewBox="0 0 14 14"><path d="M0 11L3 6H14L11.5 11Z" fill="#9a9ea4"/></svg>
<span style="left:8px;top:414px;font-size:12px;color:#d8d8d8;">F9</span>
<span style="left:47px;top:414px;font-size:12px;color:#ececec;">Prostory</span>
<svg style="left:28px;top:414px;" width="14" height="14" viewBox="0 0 14 14"><rect x="0.5" y="0.5" width="6" height="13" fill="none" stroke="#aaa"/><rect x="7" y="1" width="6.5" height="8" fill="#d8e8ff" stroke="#aaa" stroke-width="0.6"/><path d="M2 9H5M2 11H5" stroke="#6aa0e0"/></svg>
<span style="left:8px;top:436px;font-size:12px;color:#d8d8d8;">F0</span>
<span style="left:47px;top:436px;font-size:12px;color:#ececec;">Prostupy</span>
<svg style="left:28px;top:436px;" width="14" height="14" viewBox="0 0 14 14"><rect x="0" y="0" width="14" height="1.5" fill="#888"/><path d="M2 5L7 8L2 11ZM12 5L7 8L12 11Z" fill="#7aa8e8"/><path d="M1 4H13M1 12H13" stroke="#bbb"/></svg>
<span style="left:8px;top:458px;font-size:12px;color:#d8d8d8;">S1</span>
<span style="left:47px;top:458px;font-size:12px;color:#ececec;">Niky</span>
<svg style="left:28px;top:458px;" width="14" height="14" viewBox="0 0 14 14"><path d="M0 1H14" stroke="#888"/><path d="M0.5 12V9H3.5V5H10.5V9H13.5V12" fill="none" stroke="#8ab0d0"/></svg>
<span style="left:8px;top:480px;font-size:12px;color:#d8d8d8;">S2</span>
<span style="left:47px;top:480px;font-size:12px;color:#ececec;">Schody</span>
<svg style="left:28px;top:480px;" width="14" height="14" viewBox="0 0 14 14"><rect x="0.5" y="0.5" width="13" height="13" fill="none" stroke="#9ab"/><path d="M4.5 1V13M8.5 1V9M1 5H8M1 9H13M4.5 9V13" stroke="#aab"/><rect x="9" y="9" width="4" height="4" fill="#bcc"/></svg>
<span style="left:8px;top:502px;font-size:12px;color:#d8d8d8;">S3</span>
<span style="left:47px;top:502px;font-size:12px;color:#ececec;">Kótovat</span>
<svg style="left:28px;top:502px;" width="14" height="14" viewBox="0 0 14 14"><path d="M0.5 0V14M13.5 0V14M1 2H13M1 12H13" stroke="#8ab0d0"/><rect x="2" y="4" width="10" height="6" fill="#345"/><circle cx="5" cy="7" r="1.6" fill="#ccd"/><circle cx="9" cy="7" r="1.6" fill="#ccd"/></svg>
<span style="left:8px;top:524px;font-size:12px;color:#d8d8d8;">S4</span>
<span style="left:47px;top:524px;font-size:12px;color:#ececec;">Konstrukce st...</span>
<svg style="left:28px;top:524px;" width="14" height="14" viewBox="0 0 14 14"><path d="M0 0.5H13V6H6V13.5H0Z" fill="#9a9ea4"/></svg>
<span style="left:8px;top:546px;font-size:12px;color:#d8d8d8;">S5</span>
<span style="left:47px;top:546px;font-size:12px;color:#ececec;">Konstrukce kr...</span>
<svg style="left:28px;top:546px;" width="14" height="14" viewBox="0 0 14 14"><path d="M0.5 14L4 1.5L7 14L10 1.5L13.5 14" fill="none" stroke="#a8aeb8" stroke-width="1.2"/><path d="M3 14L5.5 5L8.5 14" fill="none" stroke="#7aa0e0" stroke-width="1.2"/></svg>
<span style="left:8px;top:568px;font-size:12px;color:#d8d8d8;">S6</span>
<span style="left:47px;top:568px;font-size:12px;color:#ececec;">Řez/Pohled</span>
<svg style="left:28px;top:568px;" width="14" height="14" viewBox="0 0 14 14"><circle cx="5" cy="4" r="3.5" fill="none" stroke="#b8c8d8"/><path d="M5 1V7M3 6L5 3L7 6" stroke="#b8c8d8" fill="none"/><path d="M9 5H14M0 11H14" stroke="#aaa" stroke-dasharray="1.5 1.2"/><path d="M9 13L11 9L13 13Z" fill="#ddd"/></svg>
<span style="left:8px;top:590px;font-size:12px;color:#d8d8d8;">S7</span>
<span style="left:47px;top:590px;font-size:12px;color:#ececec;">Generovat 2D</span>
<svg style="left:28px;top:590px;" width="14" height="14" viewBox="0 0 14 14"><rect x="0.5" y="0.5" width="13" height="13" fill="none" stroke="#aaa"/><path d="M3 3V6H6M8 3H11V6M3 8V11H6M8 11L11 8" stroke="#bbb" fill="none"/></svg>
<span style="left:8px;top:612px;font-size:12px;color:#d8d8d8;">S8</span>
<span style="left:47px;top:612px;font-size:12px;color:#ececec;">Generovat 3D</span>
<svg style="left:28px;top:612px;" width="14" height="14" viewBox="0 0 14 14"><path d="M1 5L7 2L13 5V10.5L7 13.5L1 10.5Z" fill="#b8c4d0"/><path d="M1 5L7 8L13 5M7 8V13.5" stroke="#e8eef4" fill="none"/><path d="M5 1L8 0L9 4L6 5Z" fill="#d8c8a0"/></svg>
<span style="left:8px;top:634px;font-size:12px;color:#d8d8d8;">S9</span>
<span style="left:47px;top:634px;font-size:12px;color:#ececec;">CAD do BIM</span>
<svg style="left:28px;top:634px;" width="14" height="14" viewBox="0 0 14 14"><rect x="0" y="0" width="14" height="3" fill="#b8bcc0"/><path d="M0 1.5H14" stroke="#666"/><rect x="0.5" y="5" width="8" height="8" fill="#98a8b8"/><rect x="2" y="7" width="4" height="4" fill="#ccd8e4"/><path d="M13 6V10H10M11.5 8.5L10 10L11.5 11.5" stroke="#bbb" fill="none"/></svg>
<span style="left:8px;top:656px;font-size:12px;color:#d8d8d8;">S0</span>
<span style="left:47px;top:656px;font-size:12px;color:#ececec;">Úpravy Stěn</span>
<svg style="left:28px;top:656px;" width="14" height="14" viewBox="0 0 14 14"><path d="M1 3L13 1V11L1 13Z" fill="#9a9ea4"/><path d="M6 13L12 7" stroke="#f0c030" stroke-width="2.5"/><path d="M5 14L6.5 12.5" stroke="#222" stroke-width="1"/></svg>
<div style="left:3px;top:768px;width:128px;height:23px;background:#2e2e2e;border-top:1px solid #d8d8d8;border-left:1px solid #d8d8d8;border-bottom:1px solid #111;border-right:1px solid #111;box-sizing:border-box"></div>
<span style="left:3px;top:773px;width:128px;text-align:center;font-size:12px;color:#ececec;">Modelování / 3D Ele...</span>
<div style="left:3px;top:792px;width:128px;height:23px;background:#2e2e2e;border-top:1px solid #d8d8d8;border-left:1px solid #d8d8d8;border-bottom:1px solid #111;border-right:1px solid #111;box-sizing:border-box"></div>
<span style="left:3px;top:797px;width:128px;text-align:center;font-size:12px;color:#ececec;">Umístění / Osazení</span>
<div style="left:3px;top:816px;width:128px;height:23px;background:#2e2e2e;border-top:1px solid #d8d8d8;border-left:1px solid #d8d8d8;border-bottom:1px solid #111;border-right:1px solid #111;box-sizing:border-box"></div>
<span style="left:3px;top:821px;width:128px;text-align:center;font-size:12px;color:#ececec;">Kreslení / Návrh</span>
<div style="left:3px;top:840px;width:128px;height:23px;background:#2e2e2e;border-top:1px solid #d8d8d8;border-left:1px solid #d8d8d8;border-bottom:1px solid #111;border-right:1px solid #111;box-sizing:border-box"></div>
<span style="left:3px;top:845px;width:128px;text-align:center;font-size:12px;color:#ececec;">Popisy / Kóty</span>
<div style="left:3px;top:864px;width:128px;height:23px;background:#2e2e2e;border-top:1px solid #d8d8d8;border-left:1px solid #d8d8d8;border-bottom:1px solid #111;border-right:1px solid #111;box-sizing:border-box"></div>
<span style="left:3px;top:869px;width:128px;text-align:center;font-size:12px;color:#ececec;">2D Úpravy</span>
<div style="left:3px;top:888px;width:128px;height:23px;background:#2e2e2e;border-top:1px solid #d8d8d8;border-left:1px solid #d8d8d8;border-bottom:1px solid #111;border-right:1px solid #111;box-sizing:border-box"></div>
<span style="left:3px;top:893px;width:128px;text-align:center;font-size:12px;color:#ececec;">3D Úpravy</span>
<div style="left:3px;top:912px;width:128px;height:23px;background:#2e2e2e;border-top:1px solid #d8d8d8;border-left:1px solid #d8d8d8;border-bottom:1px solid #111;border-right:1px solid #111;box-sizing:border-box"></div>
<span style="left:3px;top:917px;width:128px;text-align:center;font-size:12px;color:#ececec;">Vložit</span>
<div style="left:3px;top:936px;width:128px;height:23px;background:#2e2e2e;border-top:1px solid #d8d8d8;border-left:1px solid #d8d8d8;border-bottom:1px solid #111;border-right:1px solid #111;box-sizing:border-box"></div>
<span style="left:3px;top:941px;width:128px;text-align:center;font-size:12px;color:#ececec;">Ocenění / Vyhodnoce...</span>
<div style="left:3px;top:960px;width:128px;height:23px;background:#2e2e2e;border-top:1px solid #d8d8d8;border-left:1px solid #d8d8d8;border-bottom:1px solid #111;border-right:1px solid #111;box-sizing:border-box"></div>
<span style="left:3px;top:965px;width:128px;text-align:center;font-size:12px;color:#ececec;">Papír / Prezentace</span>
<div style="left:3px;top:984px;width:128px;height:23px;background:#2e2e2e;border-top:1px solid #d8d8d8;border-left:1px solid #d8d8d8;border-bottom:1px solid #111;border-right:1px solid #111;box-sizing:border-box"></div>
<span style="left:3px;top:989px;width:128px;text-align:center;font-size:12px;color:#ececec;">Výkres / Systém</span>
<div style="left:134px;top:171px;width:1256px;height:25px;background:#333"></div>
<div style="left:134px;top:170px;width:1256px;height:1px;background:#4a4a4a"></div>
<div style="left:134px;top:194px;width:1256px;height:1px;background:#5a5a5a"></div>
<div style="left:135px;top:171px;width:118px;height:24px;background:#262626;border:1px solid #5a5a5a;border-bottom:none;box-sizing:border-box"></div>
<svg style="left:139px;top:174px;" width="18" height="18" viewBox="0 0 18 18"><rect x="0.7" y="0.7" width="12.6" height="12.6" rx="1.5" fill="#e88a1a" stroke="#ffe0b0" stroke-width="1.3"/><path d="M6 3.5Q3.5 3.5 3.5 5.5Q3.5 7 5.5 7.2Q7 7.5 7 9Q7 10.5 4 10.2M8.5 11V3.5H10Q11.5 3.5 11.5 5.5Q11.5 7.3 10 7.3H8.5" fill="none" stroke="#ffd890" stroke-width="1.1"/><rect x="9.7" y="9.7" width="7.6" height="7.6" rx="1" fill="#f0a040" stroke="#ffe0b0" stroke-width="1.2"/></svg>
<span style="left:161px;top:178px;font-size:11px;color:#ececec;letter-spacing:-0.2px">Výkres-3.S12</span>
<svg style="left:238px;top:181px;" width="7" height="7" viewBox="0 0 7 7"><path d="M0.5 0.5L6.5 6.5M6.5 0.5L0.5 6.5" stroke="#ccc" stroke-width="1.1"/></svg>
<div style="left:134px;top:196px;width:1256px;height:814px;background:#fff"></div>
<div style="left:1389px;top:196px;width:1px;height:14px;background:#111"></div>
<div style="left:1374px;top:196px;width:16px;height:1px;background:#111"></div>
<svg style="left:134px;top:196px;" width="1255" height="814" viewBox="0 0 1255 814"><rect x="28" y="30" width="1" height="1" fill="#555"/><rect x="80" y="30" width="1" height="1" fill="#555"/><rect x="132" y="30" width="1" height="1" fill="#555"/><rect x="184" y="30" width="1" height="1" fill="#555"/><rect x="237" y="30" width="1" height="1" fill="#555"/><rect x="289" y="30" width="1" height="1" fill="#555"/><rect x="341" y="30" width="1" height="1" fill="#555"/><rect x="393" y="30" width="1" height="1" fill="#555"/><rect x="445" y="30" width="1" height="1" fill="#555"/><rect x="497" y="30" width="1" height="1" fill="#555"/><rect x="549" y="30" width="1" height="1" fill="#555"/><rect x="601" y="30" width="1" height="1" fill="#555"/><rect x="654" y="30" width="1" height="1" fill="#555"/><rect x="706" y="30" width="1" height="1" fill="#555"/><rect x="758" y="30" width="1" height="1" fill="#555"/><rect x="810" y="30" width="1" height="1" fill="#555"/><rect x="862" y="30" width="1" height="1" fill="#555"/><rect x="914" y="30" width="1" height="1" fill="#555"/><rect x="966" y="30" width="1" height="1" fill="#555"/><rect x="1018" y="30" width="1" height="1" fill="#555"/><rect x="1071" y="30" width="1" height="1" fill="#555"/><rect x="1123" y="30" width="1" height="1" fill="#555"/><rect x="1175" y="30" width="1" height="1" fill="#555"/><rect x="1227" y="30" width="1" height="1" fill="#555"/><rect x="28" y="83" width="1" height="1" fill="#555"/><rect x="80" y="83" width="1" height="1" fill="#555"/><rect x="132" y="83" width="1" height="1" fill="#555"/><rect x="184" y="83" width="1" height="1" fill="#555"/><rect x="237" y="83" width="1" height="1" fill="#555"/><rect x="289" y="83" width="1" height="1" fill="#555"/><rect x="341" y="83" width="1" height="1" fill="#555"/><rect x="393" y="83" width="1" height="1" fill="#555"/><rect x="445" y="83" width="1" height="1" fill="#555"/><rect x="497" y="83" width="1" height="1" fill="#555"/><rect x="549" y="83" width="1" height="1" fill="#555"/><rect x="601" y="83" width="1" height="1" fill="#555"/><rect x="654" y="83" width="1" height="1" fill="#555"/><rect x="706" y="83" width="1" height="1" fill="#555"/><rect x="758" y="83" width="1" height="1" fill="#555"/><rect x="810" y="83" width="1" height="1" fill="#555"/><rect x="862" y="83" width="1" height="1" fill="#555"/><rect x="914" y="83" width="1" height="1" fill="#555"/><rect x="966" y="83" width="1" height="1" fill="#555"/><rect x="1018" y="83" width="1" height="1" fill="#555"/><rect x="1071" y="83" width="1" height="1" fill="#555"/><rect x="1123" y="83" width="1" height="1" fill="#555"/><rect x="1175" y="83" width="1" height="1" fill="#555"/><rect x="1227" y="83" width="1" height="1" fill="#555"/><rect x="28" y="135" width="1" height="1" fill="#555"/><rect x="80" y="135" width="1" height="1" fill="#555"/><rect x="132" y="135" width="1" height="1" fill="#555"/><rect x="184" y="135" width="1" height="1" fill="#555"/><rect x="237" y="135" width="1" height="1" fill="#555"/><rect x="289" y="135" width="1" height="1" fill="#555"/><rect x="341" y="135" width="1" height="1" fill="#555"/><rect x="393" y="135" width="1" height="1" fill="#555"/><rect x="445" y="135" width="1" height="1" fill="#555"/><rect x="497" y="135" width="1" height="1" fill="#555"/><rect x="549" y="135" width="1" height="1" fill="#555"/><rect x="601" y="135" width="1" height="1" fill="#555"/><rect x="654" y="135" width="1" height="1" fill="#555"/><rect x="706" y="135" width="1" height="1" fill="#555"/><rect x="758" y="135" width="1" height="1" fill="#555"/><rect x="810" y="135" width="1" height="1" fill="#555"/><rect x="862" y="135" width="1" height="1" fill="#555"/><rect x="914" y="135" width="1" height="1" fill="#555"/><rect x="966" y="135" width="1" height="1" fill="#555"/><rect x="1018" y="135" width="1" height="1" fill="#555"/><rect x="1071" y="135" width="1" height="1" fill="#555"/><rect x="1123" y="135" width="1" height="1" fill="#555"/><rect x="1175" y="135" width="1" height="1" fill="#555"/><rect x="1227" y="135" width="1" height="1" fill="#555"/><rect x="28" y="187" width="1" height="1" fill="#555"/><rect x="80" y="187" width="1" height="1" fill="#555"/><path d="M131 187.5H134M132.5 186V189" stroke="#8a8a8a"/><rect x="184" y="187" width="1" height="1" fill="#555"/><rect x="237" y="187" width="1" height="1" fill="#555"/><rect x="289" y="187" width="1" height="1" fill="#555"/><rect x="341" y="187" width="1" height="1" fill="#555"/><path d="M392 187.5H395M393.5 186V189" stroke="#8a8a8a"/><rect x="445" y="187" width="1" height="1" fill="#555"/><rect x="497" y="187" width="1" height="1" fill="#555"/><rect x="549" y="187" width="1" height="1" fill="#555"/><rect x="601" y="187" width="1" height="1" fill="#555"/><path d="M653 187.5H656M654.5 186V189" stroke="#8a8a8a"/><rect x="706" y="187" width="1" height="1" fill="#555"/><rect x="758" y="187" width="1" height="1" fill="#555"/><rect x="810" y="187" width="1" height="1" fill="#555"/><rect x="862" y="187" width="1" height="1" fill="#555"/><path d="M913 187.5H916M914.5 186V189" stroke="#8a8a8a"/><rect x="966" y="187" width="1" height="1" fill="#555"/><rect x="1018" y="187" width="1" height="1" fill="#555"/><rect x="1071" y="187" width="1" height="1" fill="#555"/><rect x="1123" y="187" width="1" height="1" fill="#555"/><path d="M1174 187.5H1177M1175.5 186V189" stroke="#8a8a8a"/><rect x="1227" y="187" width="1" height="1" fill="#555"/><rect x="28" y="239" width="1" height="1" fill="#555"/><rect x="80" y="239" width="1" height="1" fill="#555"/><rect x="132" y="239" width="1" height="1" fill="#555"/><rect x="184" y="239" width="1" height="1" fill="#555"/><rect x="237" y="239" width="1" height="1" fill="#555"/><rect x="289" y="239" width="1" height="1" fill="#555"/><rect x="341" y="239" width="1" height="1" fill="#555"/><rect x="393" y="239" width="1" height="1" fill="#555"/><rect x="445" y="239" width="1" height="1" fill="#555"/><rect x="497" y="239" width="1" height="1" fill="#555"/><rect x="549" y="239" width="1" height="1" fill="#555"/><rect x="601" y="239" width="1" height="1" fill="#555"/><rect x="654" y="239" width="1" height="1" fill="#555"/><rect x="706" y="239" width="1" height="1" fill="#555"/><rect x="758" y="239" width="1" height="1" fill="#555"/><rect x="810" y="239" width="1" height="1" fill="#555"/><rect x="862" y="239" width="1" height="1" fill="#555"/><rect x="914" y="239" width="1" height="1" fill="#555"/><rect x="966" y="239" width="1" height="1" fill="#555"/><rect x="1018" y="239" width="1" height="1" fill="#555"/><rect x="1071" y="239" width="1" height="1" fill="#555"/><rect x="1123" y="239" width="1" height="1" fill="#555"/><rect x="1175" y="239" width="1" height="1" fill="#555"/><rect x="1227" y="239" width="1" height="1" fill="#555"/><rect x="28" y="291" width="1" height="1" fill="#555"/><rect x="80" y="291" width="1" height="1" fill="#555"/><rect x="132" y="291" width="1" height="1" fill="#555"/><rect x="184" y="291" width="1" height="1" fill="#555"/><rect x="237" y="291" width="1" height="1" fill="#555"/><rect x="289" y="291" width="1" height="1" fill="#555"/><rect x="341" y="291" width="1" height="1" fill="#555"/><rect x="393" y="291" width="1" height="1" fill="#555"/><rect x="445" y="291" width="1" height="1" fill="#555"/><rect x="497" y="291" width="1" height="1" fill="#555"/><rect x="549" y="291" width="1" height="1" fill="#555"/><rect x="601" y="291" width="1" height="1" fill="#555"/><rect x="654" y="291" width="1" height="1" fill="#555"/><rect x="706" y="291" width="1" height="1" fill="#555"/><rect x="758" y="291" width="1" height="1" fill="#555"/><rect x="810" y="291" width="1" height="1" fill="#555"/><rect x="862" y="291" width="1" height="1" fill="#555"/><rect x="914" y="291" width="1" height="1" fill="#555"/><rect x="966" y="291" width="1" height="1" fill="#555"/><rect x="1018" y="291" width="1" height="1" fill="#555"/><rect x="1071" y="291" width="1" height="1" fill="#555"/><rect x="1123" y="291" width="1" height="1" fill="#555"/><rect x="1175" y="291" width="1" height="1" fill="#555"/><rect x="1227" y="291" width="1" height="1" fill="#555"/><rect x="28" y="343" width="1" height="1" fill="#555"/><rect x="80" y="343" width="1" height="1" fill="#555"/><rect x="132" y="343" width="1" height="1" fill="#555"/><rect x="184" y="343" width="1" height="1" fill="#555"/><rect x="237" y="343" width="1" height="1" fill="#555"/><rect x="289" y="343" width="1" height="1" fill="#555"/><rect x="341" y="343" width="1" height="1" fill="#555"/><rect x="393" y="343" width="1" height="1" fill="#555"/><rect x="445" y="343" width="1" height="1" fill="#555"/><rect x="497" y="343" width="1" height="1" fill="#555"/><rect x="549" y="343" width="1" height="1" fill="#555"/><rect x="601" y="343" width="1" height="1" fill="#555"/><rect x="654" y="343" width="1" height="1" fill="#555"/><rect x="706" y="343" width="1" height="1" fill="#555"/><rect x="758" y="343" width="1" height="1" fill="#555"/><rect x="810" y="343" width="1" height="1" fill="#555"/><rect x="862" y="343" width="1" height="1" fill="#555"/><rect x="914" y="343" width="1" height="1" fill="#555"/><rect x="966" y="343" width="1" height="1" fill="#555"/><rect x="1018" y="343" width="1" height="1" fill="#555"/><rect x="1071" y="343" width="1" height="1" fill="#555"/><rect x="1123" y="343" width="1" height="1" fill="#555"/><rect x="1175" y="343" width="1" height="1" fill="#555"/><rect x="1227" y="343" width="1" height="1" fill="#555"/><rect x="28" y="395" width="1" height="1" fill="#555"/><rect x="80" y="395" width="1" height="1" fill="#555"/><rect x="132" y="395" width="1" height="1" fill="#555"/><rect x="184" y="395" width="1" height="1" fill="#555"/><rect x="237" y="395" width="1" height="1" fill="#555"/><rect x="289" y="395" width="1" height="1" fill="#555"/><rect x="341" y="395" width="1" height="1" fill="#555"/><rect x="393" y="395" width="1" height="1" fill="#555"/><rect x="445" y="395" width="1" height="1" fill="#555"/><rect x="497" y="395" width="1" height="1" fill="#555"/><rect x="549" y="395" width="1" height="1" fill="#555"/><rect x="601" y="395" width="1" height="1" fill="#555"/><rect x="654" y="395" width="1" height="1" fill="#555"/><rect x="706" y="395" width="1" height="1" fill="#555"/><rect x="758" y="395" width="1" height="1" fill="#555"/><rect x="810" y="395" width="1" height="1" fill="#555"/><rect x="862" y="395" width="1" height="1" fill="#555"/><rect x="914" y="395" width="1" height="1" fill="#555"/><rect x="966" y="395" width="1" height="1" fill="#555"/><rect x="1018" y="395" width="1" height="1" fill="#555"/><rect x="1071" y="395" width="1" height="1" fill="#555"/><rect x="1123" y="395" width="1" height="1" fill="#555"/><rect x="1175" y="395" width="1" height="1" fill="#555"/><rect x="1227" y="395" width="1" height="1" fill="#555"/><rect x="28" y="447" width="1" height="1" fill="#555"/><rect x="80" y="447" width="1" height="1" fill="#555"/><path d="M131 447.5H134M132.5 446V449" stroke="#8a8a8a"/><rect x="184" y="447" width="1" height="1" fill="#555"/><rect x="237" y="447" width="1" height="1" fill="#555"/><rect x="289" y="447" width="1" height="1" fill="#555"/><rect x="341" y="447" width="1" height="1" fill="#555"/><path d="M392 447.5H395M393.5 446V449" stroke="#8a8a8a"/><rect x="445" y="447" width="1" height="1" fill="#555"/><rect x="497" y="447" width="1" height="1" fill="#555"/><rect x="549" y="447" width="1" height="1" fill="#555"/><rect x="601" y="447" width="1" height="1" fill="#555"/><path d="M653 447.5H656M654.5 446V449" stroke="#8a8a8a"/><rect x="706" y="447" width="1" height="1" fill="#555"/><rect x="758" y="447" width="1" height="1" fill="#555"/><rect x="810" y="447" width="1" height="1" fill="#555"/><rect x="862" y="447" width="1" height="1" fill="#555"/><path d="M913 447.5H916M914.5 446V449" stroke="#8a8a8a"/><rect x="966" y="447" width="1" height="1" fill="#555"/><rect x="1018" y="447" width="1" height="1" fill="#555"/><rect x="1071" y="447" width="1" height="1" fill="#555"/><rect x="1123" y="447" width="1" height="1" fill="#555"/><path d="M1174 447.5H1177M1175.5 446V449" stroke="#8a8a8a"/><rect x="1227" y="447" width="1" height="1" fill="#555"/><rect x="28" y="499" width="1" height="1" fill="#555"/><rect x="80" y="499" width="1" height="1" fill="#555"/><rect x="132" y="499" width="1" height="1" fill="#555"/><rect x="184" y="499" width="1" height="1" fill="#555"/><rect x="237" y="499" width="1" height="1" fill="#555"/><rect x="289" y="499" width="1" height="1" fill="#555"/><rect x="341" y="499" width="1" height="1" fill="#555"/><rect x="393" y="499" width="1" height="1" fill="#555"/><rect x="445" y="499" width="1" height="1" fill="#555"/><rect x="497" y="499" width="1" height="1" fill="#555"/><rect x="549" y="499" width="1" height="1" fill="#555"/><rect x="601" y="499" width="1" height="1" fill="#555"/><rect x="654" y="499" width="1" height="1" fill="#555"/><rect x="706" y="499" width="1" height="1" fill="#555"/><rect x="758" y="499" width="1" height="1" fill="#555"/><rect x="810" y="499" width="1" height="1" fill="#555"/><rect x="862" y="499" width="1" height="1" fill="#555"/><rect x="914" y="499" width="1" height="1" fill="#555"/><rect x="966" y="499" width="1" height="1" fill="#555"/><rect x="1018" y="499" width="1" height="1" fill="#555"/><rect x="1071" y="499" width="1" height="1" fill="#555"/><rect x="1123" y="499" width="1" height="1" fill="#555"/><rect x="1175" y="499" width="1" height="1" fill="#555"/><rect x="1227" y="499" width="1" height="1" fill="#555"/><rect x="28" y="551" width="1" height="1" fill="#555"/><rect x="80" y="551" width="1" height="1" fill="#555"/><rect x="132" y="551" width="1" height="1" fill="#555"/><rect x="184" y="551" width="1" height="1" fill="#555"/><rect x="237" y="551" width="1" height="1" fill="#555"/><rect x="289" y="551" width="1" height="1" fill="#555"/><rect x="341" y="551" width="1" height="1" fill="#555"/><rect x="393" y="551" width="1" height="1" fill="#555"/><rect x="445" y="551" width="1" height="1" fill="#555"/><rect x="497" y="551" width="1" height="1" fill="#555"/><rect x="549" y="551" width="1" height="1" fill="#555"/><rect x="601" y="551" width="1" height="1" fill="#555"/><rect x="654" y="551" width="1" height="1" fill="#555"/><rect x="706" y="551" width="1" height="1" fill="#555"/><rect x="758" y="551" width="1" height="1" fill="#555"/><rect x="810" y="551" width="1" height="1" fill="#555"/><rect x="862" y="551" width="1" height="1" fill="#555"/><rect x="914" y="551" width="1" height="1" fill="#555"/><rect x="966" y="551" width="1" height="1" fill="#555"/><rect x="1018" y="551" width="1" height="1" fill="#555"/><rect x="1071" y="551" width="1" height="1" fill="#555"/><rect x="1123" y="551" width="1" height="1" fill="#555"/><rect x="1175" y="551" width="1" height="1" fill="#555"/><rect x="1227" y="551" width="1" height="1" fill="#555"/><rect x="28" y="603" width="1" height="1" fill="#555"/><rect x="80" y="603" width="1" height="1" fill="#555"/><rect x="132" y="603" width="1" height="1" fill="#555"/><rect x="184" y="603" width="1" height="1" fill="#555"/><rect x="237" y="603" width="1" height="1" fill="#555"/><rect x="289" y="603" width="1" height="1" fill="#555"/><rect x="341" y="603" width="1" height="1" fill="#555"/><rect x="393" y="603" width="1" height="1" fill="#555"/><rect x="445" y="603" width="1" height="1" fill="#555"/><rect x="497" y="603" width="1" height="1" fill="#555"/><rect x="549" y="603" width="1" height="1" fill="#555"/><rect x="601" y="603" width="1" height="1" fill="#555"/><rect x="654" y="603" width="1" height="1" fill="#555"/><rect x="706" y="603" width="1" height="1" fill="#555"/><rect x="758" y="603" width="1" height="1" fill="#555"/><rect x="810" y="603" width="1" height="1" fill="#555"/><rect x="862" y="603" width="1" height="1" fill="#555"/><rect x="914" y="603" width="1" height="1" fill="#555"/><rect x="966" y="603" width="1" height="1" fill="#555"/><rect x="1018" y="603" width="1" height="1" fill="#555"/><rect x="1071" y="603" width="1" height="1" fill="#555"/><rect x="1123" y="603" width="1" height="1" fill="#555"/><rect x="1175" y="603" width="1" height="1" fill="#555"/><rect x="1227" y="603" width="1" height="1" fill="#555"/><rect x="28" y="655" width="1" height="1" fill="#555"/><rect x="80" y="655" width="1" height="1" fill="#555"/><rect x="132" y="655" width="1" height="1" fill="#555"/><rect x="184" y="655" width="1" height="1" fill="#555"/><rect x="237" y="655" width="1" height="1" fill="#555"/><rect x="289" y="655" width="1" height="1" fill="#555"/><rect x="341" y="655" width="1" height="1" fill="#555"/><rect x="393" y="655" width="1" height="1" fill="#555"/><rect x="445" y="655" width="1" height="1" fill="#555"/><rect x="497" y="655" width="1" height="1" fill="#555"/><rect x="549" y="655" width="1" height="1" fill="#555"/><rect x="601" y="655" width="1" height="1" fill="#555"/><rect x="654" y="655" width="1" height="1" fill="#555"/><rect x="706" y="655" width="1" height="1" fill="#555"/><rect x="758" y="655" width="1" height="1" fill="#555"/><rect x="810" y="655" width="1" height="1" fill="#555"/><rect x="862" y="655" width="1" height="1" fill="#555"/><rect x="914" y="655" width="1" height="1" fill="#555"/><rect x="966" y="655" width="1" height="1" fill="#555"/><rect x="1018" y="655" width="1" height="1" fill="#555"/><rect x="1071" y="655" width="1" height="1" fill="#555"/><rect x="1123" y="655" width="1" height="1" fill="#555"/><rect x="1175" y="655" width="1" height="1" fill="#555"/><rect x="1227" y="655" width="1" height="1" fill="#555"/><rect x="28" y="707" width="1" height="1" fill="#555"/><rect x="80" y="707" width="1" height="1" fill="#555"/><path d="M131 707.5H134M132.5 706V709" stroke="#8a8a8a"/><rect x="184" y="707" width="1" height="1" fill="#555"/><rect x="237" y="707" width="1" height="1" fill="#555"/><rect x="289" y="707" width="1" height="1" fill="#555"/><rect x="341" y="707" width="1" height="1" fill="#555"/><path d="M392 707.5H395M393.5 706V709" stroke="#8a8a8a"/><rect x="445" y="707" width="1" height="1" fill="#555"/><rect x="497" y="707" width="1" height="1" fill="#555"/><rect x="549" y="707" width="1" height="1" fill="#555"/><rect x="601" y="707" width="1" height="1" fill="#555"/><path d="M653 707.5H656M654.5 706V709" stroke="#8a8a8a"/><rect x="706" y="707" width="1" height="1" fill="#555"/><rect x="758" y="707" width="1" height="1" fill="#555"/><rect x="810" y="707" width="1" height="1" fill="#555"/><rect x="862" y="707" width="1" height="1" fill="#555"/><path d="M913 707.5H916M914.5 706V709" stroke="#8a8a8a"/><rect x="966" y="707" width="1" height="1" fill="#555"/><rect x="1018" y="707" width="1" height="1" fill="#555"/><rect x="1071" y="707" width="1" height="1" fill="#555"/><rect x="1123" y="707" width="1" height="1" fill="#555"/><path d="M1174 707.5H1177M1175.5 706V709" stroke="#8a8a8a"/><rect x="1227" y="707" width="1" height="1" fill="#555"/><rect x="28" y="759" width="1" height="1" fill="#555"/><rect x="80" y="759" width="1" height="1" fill="#555"/><rect x="132" y="759" width="1" height="1" fill="#555"/><rect x="184" y="759" width="1" height="1" fill="#555"/><rect x="237" y="759" width="1" height="1" fill="#555"/><rect x="289" y="759" width="1" height="1" fill="#555"/><rect x="341" y="759" width="1" height="1" fill="#555"/><rect x="393" y="759" width="1" height="1" fill="#555"/><rect x="445" y="759" width="1" height="1" fill="#555"/><rect x="497" y="759" width="1" height="1" fill="#555"/><rect x="549" y="759" width="1" height="1" fill="#555"/><rect x="601" y="759" width="1" height="1" fill="#555"/><rect x="654" y="759" width="1" height="1" fill="#555"/><rect x="706" y="759" width="1" height="1" fill="#555"/><rect x="758" y="759" width="1" height="1" fill="#555"/><rect x="810" y="759" width="1" height="1" fill="#555"/><rect x="862" y="759" width="1" height="1" fill="#555"/><rect x="914" y="759" width="1" height="1" fill="#555"/><rect x="966" y="759" width="1" height="1" fill="#555"/><rect x="1018" y="759" width="1" height="1" fill="#555"/><rect x="1071" y="759" width="1" height="1" fill="#555"/><rect x="1123" y="759" width="1" height="1" fill="#555"/><rect x="1175" y="759" width="1" height="1" fill="#555"/><rect x="1227" y="759" width="1" height="1" fill="#555"/><rect x="28" y="811" width="1" height="1" fill="#555"/><rect x="80" y="811" width="1" height="1" fill="#555"/><rect x="132" y="811" width="1" height="1" fill="#555"/><rect x="184" y="811" width="1" height="1" fill="#555"/><rect x="237" y="811" width="1" height="1" fill="#555"/><rect x="289" y="811" width="1" height="1" fill="#555"/><rect x="341" y="811" width="1" height="1" fill="#555"/><rect x="393" y="811" width="1" height="1" fill="#555"/><rect x="445" y="811" width="1" height="1" fill="#555"/><rect x="497" y="811" width="1" height="1" fill="#555"/><rect x="549" y="811" width="1" height="1" fill="#555"/><rect x="601" y="811" width="1" height="1" fill="#555"/><rect x="654" y="811" width="1" height="1" fill="#555"/><rect x="706" y="811" width="1" height="1" fill="#555"/><rect x="758" y="811" width="1" height="1" fill="#555"/><rect x="810" y="811" width="1" height="1" fill="#555"/><rect x="862" y="811" width="1" height="1" fill="#555"/><rect x="914" y="811" width="1" height="1" fill="#555"/><rect x="966" y="811" width="1" height="1" fill="#555"/><rect x="1018" y="811" width="1" height="1" fill="#555"/><rect x="1071" y="811" width="1" height="1" fill="#555"/><rect x="1123" y="811" width="1" height="1" fill="#555"/><rect x="1175" y="811" width="1" height="1" fill="#555"/><rect x="1227" y="811" width="1" height="1" fill="#555"/></svg>
<div style="left:164px;top:966px;width:2px;height:24px;background:#1a8a1a"></div>
<div style="left:164px;top:989px;width:27px;height:2px;background:#b02020"></div>
<div style="left:1390px;top:171px;width:530px;height:839px;background:#333"></div>
<div style="left:1390px;top:170px;width:530px;height:1px;background:#4a4a4a"></div>
<div style="left:1390px;top:171px;width:2px;height:839px;background:#1e1e1e"></div>
<div style="left:1392px;top:173px;width:526px;height:834px;background:#262626;border:1px solid #4e4e4e;box-sizing:border-box"></div>
<span style="left:1400px;top:183px;font-size:11px;color:#f4f4f4;font-weight:bold;letter-spacing:0.4px">Prohlížeč komponentů</span>
<svg style="left:1864px;top:184px;" width="8" height="10" viewBox="0 0 8 10"><path d="M1.5 0.5H6.5M2.5 0.5V5M5.5 0.5V5M0.5 5.5H7.5M4 5.5V10" fill="none" stroke="#bbb"/></svg>
<svg style="left:1897px;top:184px;" width="9" height="9" viewBox="0 0 9 9"><path d="M0.5 0.5L8.5 8.5M8.5 0.5L0.5 8.5" stroke="#ccc" stroke-width="1.2"/></svg>
<div style="left:1393px;top:226px;width:524px;height:1px;background:#5a5a5a"></div>
<div style="left:1488px;top:203px;width:128px;height:24px;background:#262626;border-left:1px solid #4a4a4a;border-right:1px solid #4a4a4a;box-sizing:border-box"></div>
<div style="left:1488px;top:203px;width:128px;height:2px;background:#3a7ac0"></div>
<span style="left:1408px;top:209px;font-size:12px;color:#e4e4e4;letter-spacing:-0.6px">Správa situací</span>
<span style="left:1499px;top:209px;font-size:12px;color:#e4e4e4;letter-spacing:-0.6px">Prohlížeč komponentů</span>
<span style="left:1627px;top:209px;font-size:12px;color:#e4e4e4;letter-spacing:-0.6px">Správa papírů</span>
<span style="left:1718px;top:209px;font-size:12px;color:#e4e4e4;letter-spacing:-0.6px">Projekty</span>
<span style="left:1782px;top:209px;font-size:12px;color:#e4e4e4;letter-spacing:-0.6px">Objekt Inspektor</span>
<svg style="left:1884px;top:208px;" width="5" height="7" viewBox="0 0 5 7"><path d="M4.5 0.5V6.5L0.5 3.5Z" fill="#bbb"/></svg>
<svg style="left:1906px;top:208px;" width="5" height="7" viewBox="0 0 5 7"><path d="M0.5 0.5V6.5L4.5 3.5Z" fill="#777"/></svg>
<div style="left:1393px;top:227px;width:524px;height:488px;background:#262626"></div>
<div style="left:1393px;top:227px;width:1px;height:488px;background:#666"></div>
<div style="left:1405px;top:227px;width:1px;height:488px;background:#5a5a5a"></div>
<div style="left:1393px;top:253px;width:524px;height:1px;background:#666"></div>
<div style="left:1916px;top:227px;width:1px;height:488px;background:#444"></div>
<div style="left:1406px;top:254px;width:510px;height:19px;background:#262626"></div>
<svg style="left:1410px;top:260px;" width="10" height="7" viewBox="0 0 10 7"><path d="M0.8 0.8L5 5L9.2 0.8" fill="none" stroke="#e0e0e0" stroke-width="1.5"/></svg>
<svg style="left:1425px;top:256px;clip-path:inset(0 0 0px 0)" width="16" height="13" viewBox="0 0 16 13"><path d="M0.5 2Q0.5 0.5 2 0.5H6L7.5 2.5H14.5Q15.5 2.5 15.5 3.5V12Q15.5 12.5 15 12.5H1Q0.5 12.5 0.5 12Z" fill="#f7cf5a"/><path d="M0.5 2Q0.5 0.5 2 0.5H6L7.5 2.5H0.5Z" fill="#e6a82a"/><rect x="0.5" y="4" width="15" height="8.5" rx="1" fill="#ffe38a"/></svg>
<span style="left:1445px;top:257px;font-size:11px;color:#ececec;letter-spacing:-0.3px">ZAK Komponenty</span>
<div style="left:1406px;top:273px;width:510px;height:19px;background:#333333"></div>
<svg style="left:1429px;top:279px;" width="10" height="7" viewBox="0 0 10 7"><path d="M0.8 0.8L5 5L9.2 0.8" fill="none" stroke="#e0e0e0" stroke-width="1.5"/></svg>
<svg style="left:1444px;top:275px;clip-path:inset(0 0 0px 0)" width="16" height="13" viewBox="0 0 16 13"><path d="M0.5 2Q0.5 0.5 2 0.5H6L7.5 2.5H14.5Q15.5 2.5 15.5 3.5V12Q15.5 12.5 15 12.5H1Q0.5 12.5 0.5 12Z" fill="#f7cf5a"/><path d="M0.5 2Q0.5 0.5 2 0.5H6L7.5 2.5H0.5Z" fill="#e6a82a"/><rect x="0.5" y="4" width="15" height="8.5" rx="1" fill="#ffe38a"/></svg>
<span style="left:1464px;top:276px;font-size:11px;color:#ececec;letter-spacing:-0.3px">Stěny</span>
<div style="left:1406px;top:292px;width:510px;height:19px;background:#262626"></div>
<div style="left:1406px;top:292px;width:510px;height:1px;background:#222"></div>
<svg style="left:1449px;top:297px;" width="7" height="10" viewBox="0 0 7 10"><path d="M0.8 0.8L5 5L0.8 9.2" fill="none" stroke="#e0e0e0" stroke-width="1.5"/></svg>
<svg style="left:1463px;top:294px;clip-path:inset(0 0 0px 0)" width="16" height="13" viewBox="0 0 16 13"><path d="M0.5 2Q0.5 0.5 2 0.5H6L7.5 2.5H14.5Q15.5 2.5 15.5 3.5V12Q15.5 12.5 15 12.5H1Q0.5 12.5 0.5 12Z" fill="#f7cf5a"/><path d="M0.5 2Q0.5 0.5 2 0.5H6L7.5 2.5H0.5Z" fill="#e6a82a"/><rect x="0.5" y="4" width="15" height="8.5" rx="1" fill="#ffe38a"/></svg>
<span style="left:1483px;top:295px;font-size:11px;color:#ececec;letter-spacing:-0.3px">Betonové základy</span>
<div style="left:1406px;top:311px;width:510px;height:19px;background:#333333"></div>
<svg style="left:1449px;top:316px;" width="7" height="10" viewBox="0 0 7 10"><path d="M0.8 0.8L5 5L0.8 9.2" fill="none" stroke="#e0e0e0" stroke-width="1.5"/></svg>
<svg style="left:1463px;top:313px;clip-path:inset(0 0 0px 0)" width="16" height="13" viewBox="0 0 16 13"><path d="M0.5 2Q0.5 0.5 2 0.5H6L7.5 2.5H14.5Q15.5 2.5 15.5 3.5V12Q15.5 12.5 15 12.5H1Q0.5 12.5 0.5 12Z" fill="#f7cf5a"/><path d="M0.5 2Q0.5 0.5 2 0.5H6L7.5 2.5H0.5Z" fill="#e6a82a"/><rect x="0.5" y="4" width="15" height="8.5" rx="1" fill="#ffe38a"/></svg>
<span style="left:1483px;top:314px;font-size:11px;color:#ececec;letter-spacing:-0.3px">Cihelné stěny</span>
<div style="left:1406px;top:330px;width:510px;height:19px;background:#262626"></div>
<div style="left:1406px;top:330px;width:510px;height:1px;background:#222"></div>
<svg style="left:1449px;top:335px;" width="7" height="10" viewBox="0 0 7 10"><path d="M0.8 0.8L5 5L0.8 9.2" fill="none" stroke="#e0e0e0" stroke-width="1.5"/></svg>
<svg style="left:1463px;top:332px;clip-path:inset(0 0 0px 0)" width="16" height="13" viewBox="0 0 16 13"><path d="M0.5 2Q0.5 0.5 2 0.5H6L7.5 2.5H14.5Q15.5 2.5 15.5 3.5V12Q15.5 12.5 15 12.5H1Q0.5 12.5 0.5 12Z" fill="#f7cf5a"/><path d="M0.5 2Q0.5 0.5 2 0.5H6L7.5 2.5H0.5Z" fill="#e6a82a"/><rect x="0.5" y="4" width="15" height="8.5" rx="1" fill="#ffe38a"/></svg>
<span style="left:1483px;top:333px;font-size:11px;color:#ececec;letter-spacing:-0.3px">Dělící stěny</span>
<div style="left:1406px;top:349px;width:510px;height:19px;background:#333333"></div>
<svg style="left:1449px;top:354px;" width="7" height="10" viewBox="0 0 7 10"><path d="M0.8 0.8L5 5L0.8 9.2" fill="none" stroke="#e0e0e0" stroke-width="1.5"/></svg>
<svg style="left:1463px;top:351px;clip-path:inset(0 0 0px 0)" width="16" height="13" viewBox="0 0 16 13"><path d="M0.5 2Q0.5 0.5 2 0.5H6L7.5 2.5H14.5Q15.5 2.5 15.5 3.5V12Q15.5 12.5 15 12.5H1Q0.5 12.5 0.5 12Z" fill="#f7cf5a"/><path d="M0.5 2Q0.5 0.5 2 0.5H6L7.5 2.5H0.5Z" fill="#e6a82a"/><rect x="0.5" y="4" width="15" height="8.5" rx="1" fill="#ffe38a"/></svg>
<span style="left:1483px;top:352px;font-size:11px;color:#ececec;letter-spacing:-0.3px">Heluz</span>
<div style="left:1406px;top:368px;width:510px;height:19px;background:#262626"></div>
<div style="left:1406px;top:368px;width:510px;height:1px;background:#222"></div>
<svg style="left:1449px;top:373px;" width="7" height="10" viewBox="0 0 7 10"><path d="M0.8 0.8L5 5L0.8 9.2" fill="none" stroke="#e0e0e0" stroke-width="1.5"/></svg>
<svg style="left:1463px;top:370px;clip-path:inset(0 0 0px 0)" width="16" height="13" viewBox="0 0 16 13"><path d="M0.5 2Q0.5 0.5 2 0.5H6L7.5 2.5H14.5Q15.5 2.5 15.5 3.5V12Q15.5 12.5 15 12.5H1Q0.5 12.5 0.5 12Z" fill="#f7cf5a"/><path d="M0.5 2Q0.5 0.5 2 0.5H6L7.5 2.5H0.5Z" fill="#e6a82a"/><rect x="0.5" y="4" width="15" height="8.5" rx="1" fill="#ffe38a"/></svg>
<span style="left:1483px;top:371px;font-size:11px;color:#ececec;letter-spacing:-0.3px">Knauf</span>
<div style="left:1406px;top:387px;width:510px;height:19px;background:#333333"></div>
<svg style="left:1449px;top:392px;" width="7" height="10" viewBox="0 0 7 10"><path d="M0.8 0.8L5 5L0.8 9.2" fill="none" stroke="#e0e0e0" stroke-width="1.5"/></svg>
<svg style="left:1463px;top:389px;clip-path:inset(0 0 0px 0)" width="16" height="13" viewBox="0 0 16 13"><path d="M0.5 2Q0.5 0.5 2 0.5H6L7.5 2.5H14.5Q15.5 2.5 15.5 3.5V12Q15.5 12.5 15 12.5H1Q0.5 12.5 0.5 12Z" fill="#f7cf5a"/><path d="M0.5 2Q0.5 0.5 2 0.5H6L7.5 2.5H0.5Z" fill="#e6a82a"/><rect x="0.5" y="4" width="15" height="8.5" rx="1" fill="#ffe38a"/></svg>
<span style="left:1483px;top:390px;font-size:11px;color:#ececec;letter-spacing:-0.3px">Obecné</span>
<div style="left:1406px;top:406px;width:510px;height:19px;background:#262626"></div>
<div style="left:1406px;top:406px;width:510px;height:1px;background:#222"></div>
<svg style="left:1449px;top:411px;" width="7" height="10" viewBox="0 0 7 10"><path d="M0.8 0.8L5 5L0.8 9.2" fill="none" stroke="#e0e0e0" stroke-width="1.5"/></svg>
<svg style="left:1463px;top:408px;clip-path:inset(0 0 0px 0)" width="16" height="13" viewBox="0 0 16 13"><path d="M0.5 2Q0.5 0.5 2 0.5H6L7.5 2.5H14.5Q15.5 2.5 15.5 3.5V12Q15.5 12.5 15 12.5H1Q0.5 12.5 0.5 12Z" fill="#f7cf5a"/><path d="M0.5 2Q0.5 0.5 2 0.5H6L7.5 2.5H0.5Z" fill="#e6a82a"/><rect x="0.5" y="4" width="15" height="8.5" rx="1" fill="#ffe38a"/></svg>
<span style="left:1483px;top:409px;font-size:11px;color:#ececec;letter-spacing:-0.3px">Ostatní</span>
<div style="left:1406px;top:425px;width:510px;height:19px;background:#333333"></div>
<svg style="left:1449px;top:430px;" width="7" height="10" viewBox="0 0 7 10"><path d="M0.8 0.8L5 5L0.8 9.2" fill="none" stroke="#e0e0e0" stroke-width="1.5"/></svg>
<svg style="left:1463px;top:427px;clip-path:inset(0 0 0px 0)" width="16" height="13" viewBox="0 0 16 13"><path d="M0.5 2Q0.5 0.5 2 0.5H6L7.5 2.5H14.5Q15.5 2.5 15.5 3.5V12Q15.5 12.5 15 12.5H1Q0.5 12.5 0.5 12Z" fill="#f7cf5a"/><path d="M0.5 2Q0.5 0.5 2 0.5H6L7.5 2.5H0.5Z" fill="#e6a82a"/><rect x="0.5" y="4" width="15" height="8.5" rx="1" fill="#ffe38a"/></svg>
<span style="left:1483px;top:428px;font-size:11px;color:#ececec;letter-spacing:-0.3px">Porotherm</span>
<div style="left:1406px;top:444px;width:510px;height:19px;background:#262626"></div>
<div style="left:1406px;top:444px;width:510px;height:1px;background:#222"></div>
<svg style="left:1449px;top:449px;" width="7" height="10" viewBox="0 0 7 10"><path d="M0.8 0.8L5 5L0.8 9.2" fill="none" stroke="#e0e0e0" stroke-width="1.5"/></svg>
<svg style="left:1463px;top:446px;clip-path:inset(0 0 0px 0)" width="16" height="13" viewBox="0 0 16 13"><path d="M0.5 2Q0.5 0.5 2 0.5H6L7.5 2.5H14.5Q15.5 2.5 15.5 3.5V12Q15.5 12.5 15 12.5H1Q0.5 12.5 0.5 12Z" fill="#f7cf5a"/><path d="M0.5 2Q0.5 0.5 2 0.5H6L7.5 2.5H0.5Z" fill="#e6a82a"/><rect x="0.5" y="4" width="15" height="8.5" rx="1" fill="#ffe38a"/></svg>
<span style="left:1483px;top:447px;font-size:11px;color:#ececec;letter-spacing:-0.3px">Rigips</span>
<div style="left:1406px;top:463px;width:510px;height:19px;background:#333333"></div>
<svg style="left:1449px;top:468px;" width="7" height="10" viewBox="0 0 7 10"><path d="M0.8 0.8L5 5L0.8 9.2" fill="none" stroke="#e0e0e0" stroke-width="1.5"/></svg>
<svg style="left:1463px;top:465px;clip-path:inset(0 0 0px 0)" width="16" height="13" viewBox="0 0 16 13"><path d="M0.5 2Q0.5 0.5 2 0.5H6L7.5 2.5H14.5Q15.5 2.5 15.5 3.5V12Q15.5 12.5 15 12.5H1Q0.5 12.5 0.5 12Z" fill="#f7cf5a"/><path d="M0.5 2Q0.5 0.5 2 0.5H6L7.5 2.5H0.5Z" fill="#e6a82a"/><rect x="0.5" y="4" width="15" height="8.5" rx="1" fill="#ffe38a"/></svg>
<span style="left:1483px;top:466px;font-size:11px;color:#ececec;letter-spacing:-0.3px">Sendvičové konstrukce</span>
<div style="left:1406px;top:482px;width:510px;height:19px;background:#262626"></div>
<div style="left:1406px;top:482px;width:510px;height:1px;background:#222"></div>
<svg style="left:1449px;top:487px;" width="7" height="10" viewBox="0 0 7 10"><path d="M0.8 0.8L5 5L0.8 9.2" fill="none" stroke="#e0e0e0" stroke-width="1.5"/></svg>
<svg style="left:1463px;top:484px;clip-path:inset(0 0 0px 0)" width="16" height="13" viewBox="0 0 16 13"><path d="M0.5 2Q0.5 0.5 2 0.5H6L7.5 2.5H14.5Q15.5 2.5 15.5 3.5V12Q15.5 12.5 15 12.5H1Q0.5 12.5 0.5 12Z" fill="#f7cf5a"/><path d="M0.5 2Q0.5 0.5 2 0.5H6L7.5 2.5H0.5Z" fill="#e6a82a"/><rect x="0.5" y="4" width="15" height="8.5" rx="1" fill="#ffe38a"/></svg>
<span style="left:1483px;top:485px;font-size:11px;color:#ececec;letter-spacing:-0.3px">Sendvičové stěny</span>
<div style="left:1406px;top:501px;width:510px;height:19px;background:#333333"></div>
<svg style="left:1449px;top:506px;" width="7" height="10" viewBox="0 0 7 10"><path d="M0.8 0.8L5 5L0.8 9.2" fill="none" stroke="#e0e0e0" stroke-width="1.5"/></svg>
<svg style="left:1463px;top:503px;clip-path:inset(0 0 0px 0)" width="16" height="13" viewBox="0 0 16 13"><path d="M0.5 2Q0.5 0.5 2 0.5H6L7.5 2.5H14.5Q15.5 2.5 15.5 3.5V12Q15.5 12.5 15 12.5H1Q0.5 12.5 0.5 12Z" fill="#f7cf5a"/><path d="M0.5 2Q0.5 0.5 2 0.5H6L7.5 2.5H0.5Z" fill="#e6a82a"/><rect x="0.5" y="4" width="15" height="8.5" rx="1" fill="#ffe38a"/></svg>
<span style="left:1483px;top:504px;font-size:11px;color:#ececec;letter-spacing:-0.3px">Velox</span>
<div style="left:1406px;top:520px;width:510px;height:19px;background:#262626"></div>
<div style="left:1406px;top:520px;width:510px;height:1px;background:#222"></div>
<svg style="left:1449px;top:525px;" width="7" height="10" viewBox="0 0 7 10"><path d="M0.8 0.8L5 5L0.8 9.2" fill="none" stroke="#e0e0e0" stroke-width="1.5"/></svg>
<svg style="left:1463px;top:522px;clip-path:inset(0 0 0px 0)" width="16" height="13" viewBox="0 0 16 13"><path d="M0.5 2Q0.5 0.5 2 0.5H6L7.5 2.5H14.5Q15.5 2.5 15.5 3.5V12Q15.5 12.5 15 12.5H1Q0.5 12.5 0.5 12Z" fill="#f7cf5a"/><path d="M0.5 2Q0.5 0.5 2 0.5H6L7.5 2.5H0.5Z" fill="#e6a82a"/><rect x="0.5" y="4" width="15" height="8.5" rx="1" fill="#ffe38a"/></svg>
<span style="left:1483px;top:523px;font-size:11px;color:#ececec;letter-spacing:-0.3px">Vrstvy</span>
<div style="left:1406px;top:539px;width:510px;height:19px;background:#333333"></div>
<svg style="left:1449px;top:544px;" width="7" height="10" viewBox="0 0 7 10"><path d="M0.8 0.8L5 5L0.8 9.2" fill="none" stroke="#e0e0e0" stroke-width="1.5"/></svg>
<svg style="left:1463px;top:541px;clip-path:inset(0 0 0px 0)" width="16" height="13" viewBox="0 0 16 13"><path d="M0.5 2Q0.5 0.5 2 0.5H6L7.5 2.5H14.5Q15.5 2.5 15.5 3.5V12Q15.5 12.5 15 12.5H1Q0.5 12.5 0.5 12Z" fill="#f7cf5a"/><path d="M0.5 2Q0.5 0.5 2 0.5H6L7.5 2.5H0.5Z" fill="#e6a82a"/><rect x="0.5" y="4" width="15" height="8.5" rx="1" fill="#ffe38a"/></svg>
<span style="left:1483px;top:542px;font-size:11px;color:#ececec;letter-spacing:-0.3px">Ytong</span>
<div style="left:1406px;top:558px;width:510px;height:19px;background:#262626"></div>
<div style="left:1406px;top:558px;width:510px;height:1px;background:#222"></div>
<svg style="left:1449px;top:563px;" width="7" height="10" viewBox="0 0 7 10"><path d="M0.8 0.8L5 5L0.8 9.2" fill="none" stroke="#e0e0e0" stroke-width="1.5"/></svg>
<svg style="left:1463px;top:560px;clip-path:inset(0 0 0px 0)" width="16" height="13" viewBox="0 0 16 13"><path d="M0.5 2Q0.5 0.5 2 0.5H6L7.5 2.5H14.5Q15.5 2.5 15.5 3.5V12Q15.5 12.5 15 12.5H1Q0.5 12.5 0.5 12Z" fill="#f7cf5a"/><path d="M0.5 2Q0.5 0.5 2 0.5H6L7.5 2.5H0.5Z" fill="#e6a82a"/><rect x="0.5" y="4" width="15" height="8.5" rx="1" fill="#ffe38a"/></svg>
<span style="left:1483px;top:561px;font-size:11px;color:#ececec;letter-spacing:-0.3px">ŽB stěny</span>
<div style="left:1406px;top:577px;width:510px;height:19px;background:#333333"></div>
<svg style="left:1430px;top:582px;" width="7" height="10" viewBox="0 0 7 10"><path d="M0.8 0.8L5 5L0.8 9.2" fill="none" stroke="#e0e0e0" stroke-width="1.5"/></svg>
<svg style="left:1444px;top:579px;clip-path:inset(0 0 0px 0)" width="16" height="13" viewBox="0 0 16 13"><path d="M0.5 2Q0.5 0.5 2 0.5H6L7.5 2.5H14.5Q15.5 2.5 15.5 3.5V12Q15.5 12.5 15 12.5H1Q0.5 12.5 0.5 12Z" fill="#f7cf5a"/><path d="M0.5 2Q0.5 0.5 2 0.5H6L7.5 2.5H0.5Z" fill="#e6a82a"/><rect x="0.5" y="4" width="15" height="8.5" rx="1" fill="#ffe38a"/></svg>
<span style="left:1464px;top:580px;font-size:11px;color:#ececec;letter-spacing:-0.3px">Okna</span>
<div style="left:1406px;top:596px;width:510px;height:19px;background:#262626"></div>
<div style="left:1406px;top:596px;width:510px;height:1px;background:#222"></div>
<svg style="left:1430px;top:601px;" width="7" height="10" viewBox="0 0 7 10"><path d="M0.8 0.8L5 5L0.8 9.2" fill="none" stroke="#e0e0e0" stroke-width="1.5"/></svg>
<svg style="left:1444px;top:598px;clip-path:inset(0 0 0px 0)" width="16" height="13" viewBox="0 0 16 13"><path d="M0.5 2Q0.5 0.5 2 0.5H6L7.5 2.5H14.5Q15.5 2.5 15.5 3.5V12Q15.5 12.5 15 12.5H1Q0.5 12.5 0.5 12Z" fill="#f7cf5a"/><path d="M0.5 2Q0.5 0.5 2 0.5H6L7.5 2.5H0.5Z" fill="#e6a82a"/><rect x="0.5" y="4" width="15" height="8.5" rx="1" fill="#ffe38a"/></svg>
<span style="left:1464px;top:599px;font-size:11px;color:#ececec;letter-spacing:-0.3px">Dveře</span>
<div style="left:1406px;top:615px;width:510px;height:19px;background:#333333"></div>
<svg style="left:1430px;top:620px;" width="7" height="10" viewBox="0 0 7 10"><path d="M0.8 0.8L5 5L0.8 9.2" fill="none" stroke="#e0e0e0" stroke-width="1.5"/></svg>
<svg style="left:1444px;top:617px;clip-path:inset(0 0 0px 0)" width="16" height="13" viewBox="0 0 16 13"><path d="M0.5 2Q0.5 0.5 2 0.5H6L7.5 2.5H14.5Q15.5 2.5 15.5 3.5V12Q15.5 12.5 15 12.5H1Q0.5 12.5 0.5 12Z" fill="#f7cf5a"/><path d="M0.5 2Q0.5 0.5 2 0.5H6L7.5 2.5H0.5Z" fill="#e6a82a"/><rect x="0.5" y="4" width="15" height="8.5" rx="1" fill="#ffe38a"/></svg>
<span style="left:1464px;top:618px;font-size:11px;color:#ececec;letter-spacing:-0.3px">Ostění</span>
<div style="left:1406px;top:634px;width:510px;height:19px;background:#262626"></div>
<div style="left:1406px;top:634px;width:510px;height:1px;background:#222"></div>
<svg style="left:1430px;top:639px;" width="7" height="10" viewBox="0 0 7 10"><path d="M0.8 0.8L5 5L0.8 9.2" fill="none" stroke="#e0e0e0" stroke-width="1.5"/></svg>
<svg style="left:1444px;top:636px;clip-path:inset(0 0 0px 0)" width="16" height="13" viewBox="0 0 16 13"><path d="M0.5 2Q0.5 0.5 2 0.5H6L7.5 2.5H14.5Q15.5 2.5 15.5 3.5V12Q15.5 12.5 15 12.5H1Q0.5 12.5 0.5 12Z" fill="#f7cf5a"/><path d="M0.5 2Q0.5 0.5 2 0.5H6L7.5 2.5H0.5Z" fill="#e6a82a"/><rect x="0.5" y="4" width="15" height="8.5" rx="1" fill="#ffe38a"/></svg>
<span style="left:1464px;top:637px;font-size:11px;color:#ececec;letter-spacing:-0.3px">Niky</span>
<div style="left:1406px;top:653px;width:510px;height:19px;background:#333333"></div>
<svg style="left:1430px;top:658px;" width="7" height="10" viewBox="0 0 7 10"><path d="M0.8 0.8L5 5L0.8 9.2" fill="none" stroke="#e0e0e0" stroke-width="1.5"/></svg>
<svg style="left:1444px;top:655px;clip-path:inset(0 0 0px 0)" width="16" height="13" viewBox="0 0 16 13"><path d="M0.5 2Q0.5 0.5 2 0.5H6L7.5 2.5H14.5Q15.5 2.5 15.5 3.5V12Q15.5 12.5 15 12.5H1Q0.5 12.5 0.5 12Z" fill="#f7cf5a"/><path d="M0.5 2Q0.5 0.5 2 0.5H6L7.5 2.5H0.5Z" fill="#e6a82a"/><rect x="0.5" y="4" width="15" height="8.5" rx="1" fill="#ffe38a"/></svg>
<span style="left:1464px;top:656px;font-size:11px;color:#ececec;letter-spacing:-0.3px">Drážky</span>
<div style="left:1406px;top:672px;width:510px;height:19px;background:#262626"></div>
<div style="left:1406px;top:672px;width:510px;height:1px;background:#222"></div>
<svg style="left:1430px;top:677px;" width="7" height="10" viewBox="0 0 7 10"><path d="M0.8 0.8L5 5L0.8 9.2" fill="none" stroke="#e0e0e0" stroke-width="1.5"/></svg>
<svg style="left:1444px;top:674px;clip-path:inset(0 0 0px 0)" width="16" height="13" viewBox="0 0 16 13"><path d="M0.5 2Q0.5 0.5 2 0.5H6L7.5 2.5H14.5Q15.5 2.5 15.5 3.5V12Q15.5 12.5 15 12.5H1Q0.5 12.5 0.5 12Z" fill="#f7cf5a"/><path d="M0.5 2Q0.5 0.5 2 0.5H6L7.5 2.5H0.5Z" fill="#e6a82a"/><rect x="0.5" y="4" width="15" height="8.5" rx="1" fill="#ffe38a"/></svg>
<span style="left:1464px;top:675px;font-size:11px;color:#ececec;letter-spacing:-0.3px">Sloupy</span>
<div style="left:1406px;top:691px;width:510px;height:19px;background:#333333"></div>
<svg style="left:1430px;top:696px;" width="7" height="10" viewBox="0 0 7 10"><path d="M0.8 0.8L5 5L0.8 9.2" fill="none" stroke="#e0e0e0" stroke-width="1.5"/></svg>
<svg style="left:1444px;top:693px;clip-path:inset(0 0 0px 0)" width="16" height="13" viewBox="0 0 16 13"><path d="M0.5 2Q0.5 0.5 2 0.5H6L7.5 2.5H14.5Q15.5 2.5 15.5 3.5V12Q15.5 12.5 15 12.5H1Q0.5 12.5 0.5 12Z" fill="#f7cf5a"/><path d="M0.5 2Q0.5 0.5 2 0.5H6L7.5 2.5H0.5Z" fill="#e6a82a"/><rect x="0.5" y="4" width="15" height="8.5" rx="1" fill="#ffe38a"/></svg>
<span style="left:1464px;top:694px;font-size:11px;color:#ececec;letter-spacing:-0.3px">Stropy</span>
<div style="left:1406px;top:710px;width:510px;height:4px;background:#262626"></div>
<div style="left:1406px;top:710px;width:510px;height:1px;background:#222"></div>
<svg style="left:1444px;top:712px;clip-path:inset(0 0 11px 0)" width="16" height="13" viewBox="0 0 16 13"><path d="M0.5 2Q0.5 0.5 2 0.5H6L7.5 2.5H14.5Q15.5 2.5 15.5 3.5V12Q15.5 12.5 15 12.5H1Q0.5 12.5 0.5 12Z" fill="#f7cf5a"/><path d="M0.5 2Q0.5 0.5 2 0.5H6L7.5 2.5H0.5Z" fill="#e6a82a"/><rect x="0.5" y="4" width="15" height="8.5" rx="1" fill="#ffe38a"/></svg>
<div style="left:1415px;top:273px;width:1px;height:441px;background:repeating-linear-gradient(#3c3c3c 0 1px, transparent 1px 2px)"></div>
<div style="left:1434px;top:292px;width:1px;height:285px;background:repeating-linear-gradient(#3c3c3c 0 1px, transparent 1px 2px)"></div>
<div style="left:1482px;top:425px;width:434px;height:19px;border:1px dotted #bbb;box-sizing:border-box"></div>
<svg style="left:1398px;top:430px;" width="5" height="9" viewBox="0 0 5 9"><path d="M0 0V9L5 4.5Z" fill="#bbb"/></svg>
<div style="left:1393px;top:715px;width:527px;height:3px;background:#e8e8e8"></div>
<div style="left:1393px;top:718px;width:524px;height:286px;background:#262626"></div>
<div style="left:1395px;top:718px;width:39px;height:22px;background:#2b2b2b;border:1px solid #4a4a4a;border-bottom:none;box-sizing:border-box"></div>
<span style="left:1400px;top:725px;font-size:12px;color:#e8e8e8;">Index</span>
<div style="left:1434px;top:739px;width:483px;height:1px;background:#4a4a4a"></div>
<div style="left:1395px;top:740px;width:521px;height:24px;background:#2e2e2e"></div>
<svg style="left:1403px;top:747px;" width="2" height="10" viewBox="0 0 2 10"><rect x="0" y="0" width="2" height="2" fill="#8a8a8a"/><rect x="0" y="4" width="2" height="2" fill="#8a8a8a"/><rect x="0" y="8" width="2" height="2" fill="#8a8a8a"/></svg>
<div style="left:1503px;top:741px;width:24px;height:22px;background:#3d3d3d"></div>
<svg style="left:1416px;top:745px;" width="14" height="14" viewBox="0 0 14 14"><rect x="0" y="2" width="6" height="4" fill="#aaa"/><rect x="0" y="8" width="6" height="4" fill="#aaa"/><path d="M8 4H13M8 10H13" stroke="#aaa"/></svg>
<svg style="left:1439px;top:745px;" width="14" height="14" viewBox="0 0 14 14"><rect x="0" y="0" width="4" height="3" fill="#aaa"/><rect x="0" y="5" width="4" height="3" fill="#aaa"/><rect x="0" y="10" width="4" height="3" fill="#aaa"/><path d="M6 1.5H12M6 6.5H12M6 11.5H12" stroke="#aaa"/></svg>
<svg style="left:1461px;top:745px;" width="14" height="14" viewBox="0 0 14 14"><path d="M0 2H6M8 2H14M0 6H6M8 6H14M0 10H6M8 10H14" stroke="#aaa"/></svg>
<svg style="left:1484px;top:745px;" width="14" height="14" viewBox="0 0 14 14"><path d="M0 2H14M0 5H14M0 8H14M0 11H14" stroke="#aaa"/></svg>
<svg style="left:1508px;top:745px;" width="14" height="14" viewBox="0 0 14 14"><rect x="1" y="0" width="11" height="8" rx="2" fill="#aaa"/><path d="M2 10H11M2 12.5H11" stroke="#aaa"/></svg>
<svg style="left:1532px;top:745px;" width="14" height="14" viewBox="0 0 14 14"><rect x="0" y="0" width="5" height="5" rx="1" fill="#aaa"/><rect x="7" y="0" width="5" height="5" rx="1" fill="#aaa"/><rect x="0" y="7" width="5" height="5" rx="1" fill="#aaa"/><rect x="7" y="7" width="5" height="5" rx="1" fill="#aaa"/></svg>
<svg style="left:1555px;top:745px;" width="14" height="14" viewBox="0 0 14 14"><path d="M5.5 1V13M1.5 5L5.5 1L9.5 5" fill="none" stroke="#bbb" stroke-width="1.2"/></svg>
<svg style="left:1577px;top:745px;" width="14" height="14" viewBox="0 0 14 14"><path d="M0 2H5L6 3H11V12H0Z" fill="#c8b060"/><path d="M0 12L2 6H14L12 12Z" fill="#f0c040"/><path d="M11 9V14M8.5 11.5H13.5" stroke="#40c060" stroke-width="1.5"/></svg>
<svg style="left:1600px;top:745px;" width="14" height="14" viewBox="0 0 14 14"><path d="M1 1L13 13M13 1L1 13" stroke="#e8404a" stroke-width="2.2"/></svg>
<svg style="left:1624px;top:745px;" width="14" height="14" viewBox="0 0 14 14"><path d="M3 5L7 0H14L10 5Z" fill="#cfe0f8"/><path d="M8 7H14M11 7V14" stroke="#ccc" stroke-width="1.5"/><path d="M1 9L3 7L5 9M3 7V13" fill="none" stroke="#999"/></svg>
<svg style="left:1648px;top:745px;" width="14" height="14" viewBox="0 0 14 14"><path d="M0.5 0.5H8L11.5 4V13.5H0.5Z" fill="#ddd"/><rect x="1" y="8" width="10" height="5" fill="#5b8fd8"/></svg>
<div style="left:1550px;top:742px;width:1px;height:20px;background:#444"></div>
<div style="left:1619px;top:742px;width:1px;height:20px;background:#444"></div>
<div style="left:1643px;top:742px;width:1px;height:20px;background:#444"></div>
<div style="left:1396px;top:765px;width:520px;height:240px;background:#333;border:1px solid #555;box-sizing:border-box"></div>
<div style="left:1397px;top:766px;width:518px;height:1px;background:#111"></div>
<div style="left:1418px;top:780px;width:100px;height:75px;background:#fff"></div>
<svg style="left:1418px;top:813px;overflow:hidden" width="100" height="9" viewBox="0 0 100 9"><path d="M-6 9L3 0" stroke="#857878" stroke-width="0.9"/><path d="M4 9L13 0" stroke="#857878" stroke-width="0.9"/><path d="M14 9L23 0" stroke="#857878" stroke-width="0.9"/><path d="M24 9L33 0" stroke="#857878" stroke-width="0.9"/><path d="M34 9L43 0" stroke="#857878" stroke-width="0.9"/><path d="M44 9L53 0" stroke="#857878" stroke-width="0.9"/><path d="M54 9L63 0" stroke="#857878" stroke-width="0.9"/><path d="M64 9L73 0" stroke="#857878" stroke-width="0.9"/><path d="M74 9L83 0" stroke="#857878" stroke-width="0.9"/><path d="M84 9L93 0" stroke="#857878" stroke-width="0.9"/><path d="M94 9L103 0" stroke="#857878" stroke-width="0.9"/><path d="M104 9L113 0" stroke="#857878" stroke-width="0.9"/><rect x="0.5" y="0.5" width="99" height="8" fill="none" stroke="#6e6464"/></svg>
<div style="left:1561px;top:780px;width:100px;height:75px;background:#fff"></div>
<svg style="left:1561px;top:813px;overflow:hidden" width="100" height="9" viewBox="0 0 100 9"><path d="M13 0L22 9M22 0L13 9" stroke="#857878" stroke-width="0.8"/><path d="M22 0L31 9M31 0L22 9" stroke="#857878" stroke-width="0.8"/><path d="M39 0L48 9M48 0L39 9" stroke="#857878" stroke-width="0.8"/><path d="M48 0L57 9M57 0L48 9" stroke="#857878" stroke-width="0.8"/><path d="M68 0L77 9M77 0L68 9" stroke="#857878" stroke-width="0.8"/><path d="M77 0L86 9M86 0L77 9" stroke="#857878" stroke-width="0.8"/><rect x="0.5" y="0.5" width="99" height="8" fill="none" stroke="#6e6464"/></svg>
<div style="left:1704px;top:780px;width:100px;height:75px;background:#fff"></div>
<svg style="left:1704px;top:811px;overflow:hidden" width="100" height="13" viewBox="0 0 100 13"><path d="M-2 0L9 13M9 0L-2 13" stroke="#857878" stroke-width="0.8"/><path d="M9 0L20 13M20 0L9 13" stroke="#857878" stroke-width="0.8"/><path d="M20 0L31 13M31 0L20 13" stroke="#857878" stroke-width="0.8"/><path d="M31 0L42 13M42 0L31 13" stroke="#857878" stroke-width="0.8"/><path d="M42 0L53 13M53 0L42 13" stroke="#857878" stroke-width="0.8"/><path d="M53 0L64 13M64 0L53 13" stroke="#857878" stroke-width="0.8"/><path d="M64 0L75 13M75 0L64 13" stroke="#857878" stroke-width="0.8"/><path d="M75 0L86 13M86 0L75 13" stroke="#857878" stroke-width="0.8"/><path d="M86 0L97 13M97 0L86 13" stroke="#857878" stroke-width="0.8"/><path d="M97 0L108 13M108 0L97 13" stroke="#857878" stroke-width="0.8"/><rect x="0.5" y="0.5" width="99" height="12" fill="none" stroke="#6e6464"/></svg>
<div style="left:1418px;top:923px;width:100px;height:75px;background:#fff"></div>
<svg style="left:1418px;top:954px;overflow:hidden" width="100" height="13" viewBox="0 0 100 13"><path d="M-6 13L7 0" stroke="#857878" stroke-width="0.9"/><path d="M4 13L17 0" stroke="#857878" stroke-width="0.9"/><path d="M14 13L27 0" stroke="#857878" stroke-width="0.9"/><path d="M24 13L37 0" stroke="#857878" stroke-width="0.9"/><path d="M34 13L47 0" stroke="#857878" stroke-width="0.9"/><path d="M44 13L57 0" stroke="#857878" stroke-width="0.9"/><path d="M54 13L67 0" stroke="#857878" stroke-width="0.9"/><path d="M64 13L77 0" stroke="#857878" stroke-width="0.9"/><path d="M74 13L87 0" stroke="#857878" stroke-width="0.9"/><path d="M84 13L97 0" stroke="#857878" stroke-width="0.9"/><path d="M94 13L107 0" stroke="#857878" stroke-width="0.9"/><path d="M104 13L117 0" stroke="#857878" stroke-width="0.9"/><rect x="0.5" y="0.5" width="99" height="12" fill="none" stroke="#6e6464"/></svg>
<div style="left:1561px;top:923px;width:100px;height:75px;background:#fff"></div>
<svg style="left:1561px;top:954px;overflow:hidden" width="100" height="13" viewBox="0 0 100 13"><path d="M13 0L22 13M22 0L13 13" stroke="#857878" stroke-width="0.8"/><path d="M22 0L31 13M31 0L22 13" stroke="#857878" stroke-width="0.8"/><path d="M39 0L48 13M48 0L39 13" stroke="#857878" stroke-width="0.8"/><path d="M48 0L57 13M57 0L48 13" stroke="#857878" stroke-width="0.8"/><path d="M68 0L77 13M77 0L68 13" stroke="#857878" stroke-width="0.8"/><path d="M77 0L86 13M86 0L77 13" stroke="#857878" stroke-width="0.8"/><rect x="0.5" y="0.5" width="99" height="12" fill="none" stroke="#6e6464"/></svg>
<div style="left:1704px;top:923px;width:100px;height:75px;background:#fff"></div>
<svg style="left:1704px;top:954px;overflow:hidden" width="100" height="13" viewBox="0 0 100 13"><path d="M-6 13L7 0" stroke="#857878" stroke-width="0.9"/><path d="M4 13L17 0" stroke="#857878" stroke-width="0.9"/><path d="M14 13L27 0" stroke="#857878" stroke-width="0.9"/><path d="M24 13L37 0" stroke="#857878" stroke-width="0.9"/><path d="M34 13L47 0" stroke="#857878" stroke-width="0.9"/><path d="M44 13L57 0" stroke="#857878" stroke-width="0.9"/><path d="M54 13L67 0" stroke="#857878" stroke-width="0.9"/><path d="M64 13L77 0" stroke="#857878" stroke-width="0.9"/><path d="M74 13L87 0" stroke="#857878" stroke-width="0.9"/><path d="M84 13L97 0" stroke="#857878" stroke-width="0.9"/><path d="M94 13L107 0" stroke="#857878" stroke-width="0.9"/><path d="M104 13L117 0" stroke="#857878" stroke-width="0.9"/><rect x="0.5" y="0.5" width="99" height="12" fill="none" stroke="#6e6464"/></svg>
<span style="left:1387px;top:871px;width:160px;text-align:center;font-size:11px;color:#e8e8e8;letter-spacing:-0.2px;line-height:13px;white-space:normal">Cihel příčka Porotherm 8<br>P+D.zac</span>
<span style="left:1530px;top:871px;width:160px;text-align:center;font-size:11px;color:#e8e8e8;letter-spacing:-0.2px;line-height:13px;white-space:normal">Cihel příčka Porotherm 8<br>Profi.zac</span>
<span style="left:1673px;top:871px;width:160px;text-align:center;font-size:11px;color:#e8e8e8;letter-spacing:-0.2px;line-height:13px;white-space:normal">Cihel příčka Porotherm 11,5<br>AKU.zac</span>
<div style="left:1897px;top:767px;width:15px;height:236px;background:#2e2e2e"></div>
<svg style="left:1900px;top:770px;" width="9" height="8" viewBox="0 0 9 8"><path d="M0 7H9L4.5 0Z" fill="#ccc"/></svg>
<div style="left:1898px;top:784px;width:13px;height:32px;background:#3a3a3a;border:1px solid #444;box-sizing:border-box"></div>
<svg style="left:1900px;top:991px;" width="9" height="8" viewBox="0 0 9 8"><path d="M0 0H9L4.5 7Z" fill="#ccc"/></svg>
<div style="left:0px;top:1010px;width:1920px;height:22px;background:#333"></div>
<div style="left:0px;top:1010px;width:1920px;height:1px;background:#1e1e1e"></div>
<svg style="left:7px;top:1016px;" width="2" height="10" viewBox="0 0 2 10"><rect x="0" y="0" width="2" height="2" fill="#8a8a8a"/><rect x="0" y="4" width="2" height="2" fill="#8a8a8a"/><rect x="0" y="8" width="2" height="2" fill="#8a8a8a"/></svg>
<svg style="left:21px;top:1015px;" width="13" height="13" viewBox="0 0 13 13"><rect x="0.5" y="0.5" width="12" height="12" fill="#2a2a2a" stroke="#aaa"/><text x="6.5" y="10.5" text-anchor="middle" font-size="10" font-weight="bold" fill="#ccc" font-family="Liberation Sans">X</text></svg>
<span style="left:79px;top:1014px;font-size:12px;color:#e8e8e8;">26556</span>
<svg style="left:121px;top:1015px;" width="13" height="13" viewBox="0 0 13 13"><rect x="0.5" y="0.5" width="12" height="12" fill="#2a2a2a" stroke="#aaa"/><text x="6.5" y="10.5" text-anchor="middle" font-size="10" font-weight="bold" fill="#ccc" font-family="Liberation Sans">Y</text></svg>
<span style="left:179px;top:1014px;font-size:12px;color:#e8e8e8;">13585</span>
<svg style="left:221px;top:1015px;" width="13" height="13" viewBox="0 0 13 13"><rect x="0.5" y="0.5" width="12" height="12" fill="#2a2a2a" stroke="#aaa"/><text x="6.5" y="10.5" text-anchor="middle" font-size="10" font-weight="bold" fill="#ccc" font-family="Liberation Sans">Z</text></svg>
<span style="left:307px;top:1014px;font-size:12px;color:#e8e8e8;">0</span>
<svg style="left:321px;top:1015px;" width="13" height="13" viewBox="0 0 13 13"><rect x="0.5" y="0.5" width="12" height="12" fill="#2a2a2a" stroke="#aaa"/><text x="6.5" y="10.5" text-anchor="middle" font-size="10" font-weight="bold" fill="#ccc" font-family="Liberation Sans">W</text></svg>
<span style="left:363px;top:1014px;font-size:12px;color:#e8e8e8;">27-5'-36"</span>
<svg style="left:421px;top:1015px;" width="13" height="13" viewBox="0 0 13 13"><rect x="0.5" y="0.5" width="12" height="12" fill="#2a2a2a" stroke="#aaa"/><text x="6.5" y="10.5" text-anchor="middle" font-size="10" font-weight="bold" fill="#ccc" font-family="Liberation Sans">D</text></svg>
<span style="left:479px;top:1014px;font-size:12px;color:#e8e8e8;">29829</span>
<svg style="left:556px;top:1020px;" width="7" height="4" viewBox="0 0 7 4"><path d="M0.5 0H6.5L3.5 3.5Z" fill="#c8c8c8"/></svg>
<svg style="left:577px;top:1016px;" width="2" height="10" viewBox="0 0 2 10"><rect x="0" y="0" width="2" height="2" fill="#8a8a8a"/><rect x="0" y="4" width="2" height="2" fill="#8a8a8a"/><rect x="0" y="8" width="2" height="2" fill="#8a8a8a"/></svg>
<svg style="left:589px;top:1014px;" width="15" height="15" viewBox="0 0 15 15"><rect x="0.5" y="0.5" width="13" height="13" fill="#2a3548" stroke="#7aa0d0"/><path d="M3 3L11 11M3 11V3H11" stroke="#9ab8e0" fill="none"/></svg>
<span style="left:612px;top:1014px;font-size:12px;color:#888;">Situace</span>
<div style="left:656px;top:1011px;width:150px;height:20px;background:#2a2a2a;border:1px solid #5a5a5a;box-sizing:border-box"></div>
<svg style="left:793px;top:1020px;" width="7" height="4" viewBox="0 0 7 4"><path d="M0.5 0H6.5L3.5 3.5Z" fill="#c8c8c8"/></svg>
<svg style="left:810px;top:1014px;" width="15" height="15" viewBox="0 0 15 15"><rect x="0.5" y="0.5" width="12" height="12" fill="#2a3548" stroke="#7aa0d0"/><path d="M11 10V15M8.5 12.5H13.5" stroke="#ddd"/></svg>
<span style="left:833px;top:1014px;font-size:12px;color:#e8e8e8;letter-spacing:-0.2px">Úroveň detailu</span>
<div style="left:916px;top:1011px;width:99px;height:20px;background:#2a2a2a;border:1px solid #5a5a5a;box-sizing:border-box"></div>
<span style="left:919px;top:1014px;font-size:12px;color:#e8e8e8;">Standard</span>
<svg style="left:1002px;top:1020px;" width="7" height="4" viewBox="0 0 7 4"><path d="M0.5 0H6.5L3.5 3.5Z" fill="#c8c8c8"/></svg>
<div style="left:1016px;top:1011px;width:80px;height:20px;background:#2a2a2a;border:1px solid #5a5a5a;box-sizing:border-box"></div>
<span style="left:1019px;top:1014px;font-size:12px;color:#e8e8e8;">Standard</span>
<svg style="left:1083px;top:1020px;" width="7" height="4" viewBox="0 0 7 4"><path d="M0.5 0H6.5L3.5 3.5Z" fill="#c8c8c8"/></svg>
<div style="left:1096px;top:1011px;width:140px;height:20px;background:#2a2a2a;border:1px solid #5a5a5a;box-sizing:border-box"></div>
<span style="left:1099px;top:1014px;font-size:12px;color:#e8e8e8;">interní paleta</span>
<svg style="left:1223px;top:1020px;" width="7" height="4" viewBox="0 0 7 4"><path d="M0.5 0H6.5L3.5 3.5Z" fill="#c8c8c8"/></svg>
<span style="left:1240px;top:1014px;font-size:12px;color:#e8e8e8;letter-spacing:-0.2px">Měřítko tisk</span>
<div style="left:1306px;top:1011px;width:75px;height:20px;background:#2a2a2a;border:1px solid #5a5a5a;box-sizing:border-box"></div>
<span style="left:1309px;top:1014px;font-size:12px;color:#e8e8e8;">1:50</span>
<svg style="left:1368px;top:1020px;" width="7" height="4" viewBox="0 0 7 4"><path d="M0.5 0H6.5L3.5 3.5Z" fill="#c8c8c8"/></svg>
<div style="left:1380px;top:1011px;width:1px;height:19px;background:#5a5a5a"></div>
<svg style="left:1385px;top:1014px;" width="14" height="14" viewBox="0 0 14 14"><rect x="0" y="0" width="14" height="14" rx="1.5" fill="#777"/><rect x="1.5" y="1.5" width="3" height="3" fill="#e8b040"/><rect x="5.5" y="1.5" width="3" height="3" fill="#e89050"/><rect x="9.5" y="1.5" width="3" height="3" fill="#e05050"/><rect x="1.5" y="5.5" width="3" height="3" fill="#70c050"/><rect x="5.5" y="5.5" width="3" height="3" fill="#50c0c0"/><rect x="9.5" y="5.5" width="3" height="3" fill="#d07090"/><rect x="1.5" y="9.5" width="3" height="3" fill="#60a060"/><rect x="5.5" y="9.5" width="3" height="3" fill="#5090e0"/><rect x="9.5" y="9.5" width="3" height="3" fill="#9070d0"/></svg>
<svg style="left:1408px;top:1013px;" width="15" height="16" viewBox="0 0 15 16"><rect x="3.5" y="0.5" width="7" height="4" fill="none" stroke="#d8d8d8"/><rect x="0.5" y="4.5" width="13" height="7" rx="1" fill="#d8d8d8"/><rect x="3" y="9" width="7" height="4" fill="#8a8ae8"/><circle cx="12" cy="12" r="2.5" fill="#e8c040"/></svg>
<svg style="left:1431px;top:1014px;" width="15" height="14" viewBox="0 0 15 14"><rect x="0.5" y="0.5" width="14" height="12" fill="none" stroke="#aaa"/><path d="M7.5 1V12M1 6.5H14" stroke="#aaa"/><path d="M2 4H6M9 4H13M2 9H6" stroke="#ccc" stroke-width="1.5"/></svg>
<svg style="left:1453px;top:1014px;" width="15" height="14" viewBox="0 0 15 14"><rect x="0" y="0" width="15" height="13" fill="#8a96a8"/><path d="M2 4H6M9 4H13M2 9H6M9 9H13" stroke="#333" stroke-width="2"/></svg>
<svg style="left:1477px;top:1015px;" width="15" height="12" viewBox="0 0 15 12"><rect x="0.5" y="0.5" width="14" height="11" fill="none" stroke="#bbb" stroke-dasharray="1.5 1"/><rect x="8" y="7" width="5" height="3" fill="#888"/></svg>
<svg style="left:1503px;top:1020px;" width="7" height="4" viewBox="0 0 7 4"><path d="M0.5 0H6.5L3.5 3.5Z" fill="#c8c8c8"/></svg>
<svg style="left:1523px;top:1016px;" width="2" height="10" viewBox="0 0 2 10"><rect x="0" y="0" width="2" height="2" fill="#8a8a8a"/><rect x="0" y="4" width="2" height="2" fill="#8a8a8a"/><rect x="0" y="8" width="2" height="2" fill="#8a8a8a"/></svg>
<svg style="left:1536px;top:1013px;" width="15" height="15" viewBox="0 0 15 15"><path d="M10 0V14M1 5H14" stroke="#ccc"/><path d="M2 7V13H6" stroke="#aaa" fill="none"/></svg>
<div style="left:1555px;top:1011px;width:69px;height:21px;background:#3c3c3c"></div>
<div style="left:1647px;top:1011px;width:69px;height:21px;background:#3c3c3c"></div>
<div style="left:1739px;top:1011px;width:115px;height:21px;background:#3c3c3c"></div>
<div style="left:1877px;top:1011px;width:23px;height:21px;background:#3c3c3c"></div>
<svg style="left:1559px;top:1014px;" width="14" height="14" viewBox="0 0 14 14"><rect x="0.5" y="0.5" width="13" height="13" fill="#2a2a2a" stroke="#aaa"/><rect x="1" y="1" width="12" height="3" fill="#8ab8f0"/><path d="M2.5 6H5M7 6H12M2.5 9H5M7 9H12M2.5 12H5M7 12H12" stroke="#e0a040" stroke-width="1.2"/></svg>
<svg style="left:1582px;top:1014px;" width="14" height="14" viewBox="0 0 14 14"><rect x="0.5" y="0.5" width="13" height="13" fill="#2a2a2a" stroke="#aaa"/><rect x="1" y="1" width="12" height="3" fill="#8ab8f0"/><path d="M2 6.5H12M2 9.5H12M2 12H12" stroke="#999" stroke-width="1.5"/></svg>
<svg style="left:1605px;top:1014px;" width="14" height="14" viewBox="0 0 14 14"><rect x="0.5" y="0.5" width="13" height="13" fill="#2a2a2a" stroke="#aaa"/><rect x="1" y="1" width="12" height="3" fill="#8ab8f0"/><path d="M3 12L11 5M4 9A3 3 0 0 1 10 8" stroke="#bbb" fill="none"/></svg>
<svg style="left:1628px;top:1014px;" width="14" height="14" viewBox="0 0 14 14"><rect x="0.5" y="0.5" width="13" height="13" fill="#2a2a2a" stroke="#aaa"/><rect x="1" y="1" width="12" height="3" fill="#8ab8f0"/><circle cx="7" cy="8.5" r="3.5" fill="#7aa0c8"/></svg>
<svg style="left:1651px;top:1014px;" width="14" height="14" viewBox="0 0 14 14"><rect x="0.5" y="0.5" width="13" height="13" fill="#2a2a2a" stroke="#aaa"/><rect x="1" y="1" width="12" height="3" fill="#8ab8f0"/><path d="M4 12V6L8 12Z" fill="#9ab0d8"/></svg>
<svg style="left:1674px;top:1014px;" width="14" height="14" viewBox="0 0 14 14"><rect x="0.5" y="0.5" width="13" height="13" fill="#2a2a2a" stroke="#aaa"/><rect x="1" y="1" width="12" height="3" fill="#8ab8f0"/><path d="M3 12L11 5" stroke="#ccc" stroke-width="1.5"/><path d="M8 12L12 8V12Z" fill="#8ab8f0"/></svg>
<svg style="left:1697px;top:1014px;" width="14" height="14" viewBox="0 0 14 14"><path d="M3.5 0V14M7.5 0V14M11.5 0V14M0 3.5H14M0 7.5H14M0 11.5H14" stroke="#ddd"/></svg>
<svg style="left:1720px;top:1014px;" width="15" height="14" viewBox="0 0 15 14"><path d="M3.5 0V14M7.5 3V14M0 7.5H14M0 11.5H14" stroke="#ddd"/><ellipse cx="11" cy="3" rx="3.5" ry="2.5" fill="#e8e8e8"/><circle cx="11" cy="3" r="1.2" fill="#555"/></svg>
<svg style="left:1743px;top:1014px;" width="15" height="15" viewBox="0 0 15 15"><path d="M2 14V2M2 14H13" stroke="#50c060" stroke-width="1.2"/><path d="M2 14H13" stroke="#e05050" stroke-width="1.5"/><circle cx="2" cy="13" r="1.5" fill="#6aa0e0"/><ellipse cx="11" cy="3" rx="3.5" ry="2.5" fill="#e8e8e8"/><circle cx="11" cy="3" r="1.2" fill="#555"/></svg>
<svg style="left:1766px;top:1014px;" width="15" height="15" viewBox="0 0 15 15"><path d="M1 5L7 13L13 5" stroke="#ccc" fill="none"/><path d="M1 5L4 9" stroke="#50c060" stroke-width="1.5"/><path d="M13 5L10 9" stroke="#e05050" stroke-width="1.5"/><circle cx="7" cy="10" r="1.2" fill="#6aa0e0"/><ellipse cx="11" cy="3" rx="3.5" ry="2.5" fill="#e8e8e8"/><circle cx="11" cy="3" r="1.2" fill="#555"/></svg>
<svg style="left:1789px;top:1014px;" width="15" height="15" viewBox="0 0 15 15"><path d="M3 0V14M0 11H14" stroke="#ccc"/><rect x="4" y="4" width="8" height="6" fill="#8aa8d0"/><ellipse cx="11" cy="3" rx="3.5" ry="2.5" fill="#e8e8e8"/><circle cx="11" cy="3" r="1.2" fill="#555"/></svg>
<svg style="left:1812px;top:1014px;" width="15" height="15" viewBox="0 0 15 15"><path d="M3 0V14M0 11H14" stroke="#ccc"/><rect x="4" y="4" width="8" height="6" fill="#7ab0f0"/><ellipse cx="11" cy="3" rx="3.5" ry="2.5" fill="#e8e8e8"/><circle cx="11" cy="3" r="1.2" fill="#555"/></svg>
<svg style="left:1835px;top:1014px;" width="15" height="15" viewBox="0 0 15 15"><rect x="0.5" y="2.5" width="13" height="11" fill="#2a2a3a" stroke="#ddd" stroke-width="1.2"/><path d="M2 12L7 6L12 12Z" fill="#9ab0e8"/><ellipse cx="11" cy="3" rx="3.5" ry="2.5" fill="#e8e8e8"/><circle cx="11" cy="3" r="1.2" fill="#555"/></svg>
<svg style="left:1858px;top:1014px;" width="15" height="15" viewBox="0 0 15 15"><rect x="0" y="6" width="14" height="7" fill="#6aa8f0"/><ellipse cx="11" cy="3" rx="3.5" ry="2.5" fill="#e8e8e8"/><circle cx="11" cy="3" r="1.2" fill="#555"/></svg>
<svg style="left:1880px;top:1014px;" width="15" height="15" viewBox="0 0 15 15"><path d="M2 2V9A5 5 0 0 0 12 9V5" stroke="#ccc" fill="none"/><circle cx="2" cy="8" r="1.5" fill="#e05050"/><circle cx="12" cy="5" r="1.5" fill="#e0c050"/><path d="M0 0H4L2 3Z" fill="#50c060"/><ellipse cx="11" cy="3" rx="3.5" ry="2.5" fill="#e8e8e8"/><circle cx="11" cy="3" r="1.2" fill="#555"/></svg>
<svg style="left:1907px;top:1020px;" width="7" height="4" viewBox="0 0 7 4"><path d="M0.5 0H6.5L3.5 3.5Z" fill="#c8c8c8"/></svg>
</body></html>
